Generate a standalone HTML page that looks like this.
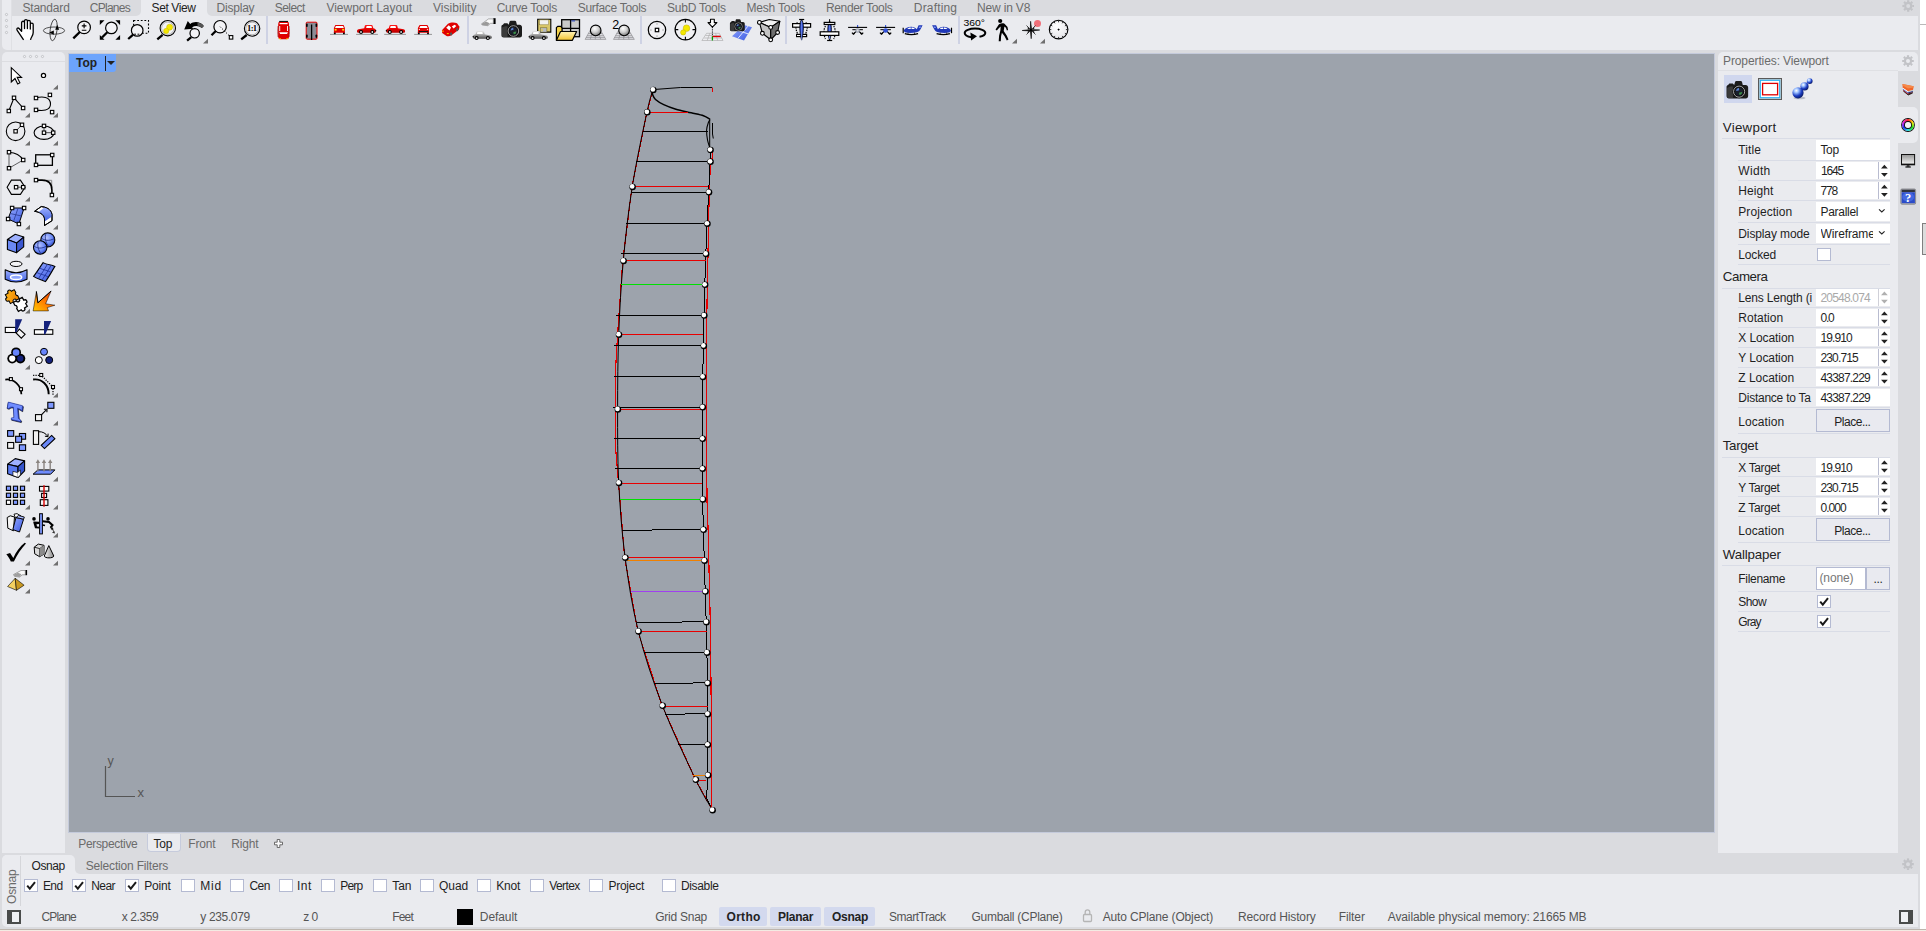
<!DOCTYPE html>
<html><head><meta charset="utf-8"><title>Rhino</title>
<style>
html,body{margin:0;padding:0;}
body{width:1926px;height:931px;overflow:hidden;background:#DADBDF;position:relative;font-family:"Liberation Sans", sans-serif;}
body>div,body>svg,body>span{position:absolute;}
.t{white-space:pre;line-height:16px;height:16px;}
svg{overflow:visible;}
</style></head><body>
<div style="left:1920px;top:0px;width:6px;height:929px;background:#fff;"></div>
<div style="left:1920px;top:24px;width:6px;height:1px;background:#b9b9b9;"></div>
<div style="left:1922px;top:223px;width:6px;height:32px;background:#dcdcdc;border:1px solid #7f7f7f;box-sizing:border-box;"></div>
<div style="left:0px;top:929px;width:1926px;height:1px;background:#bdb5ad;"></div>
<div style="left:0px;top:930px;width:1926px;height:1px;background:#f3ebe3;"></div>
<div style="left:2px;top:0px;width:1916px;height:50px;background:#EAEBEF;border-radius:0 0 0 5px;"></div>
<div style="left:11px;top:0px;width:130px;height:16px;background:#DADBDF;border-radius:0 0 5px 0;"></div>
<div style="left:207px;top:0px;width:1711px;height:16px;background:#DADBDF;border-radius:0 0 0 5px;"></div>
<div style="left:11px;top:0px;width:1px;height:50px;background:#dfe0e4;"></div>
<svg style="left:4px;top:11.5px" width="5" height="5" viewBox="0 0 5 5"><circle cx="2.5" cy="2.5" r="1.1" fill="#f2f2f5" stroke="#b2b3b8" stroke-width=".7"/></svg>
<svg style="left:4px;top:17.5px" width="5" height="5" viewBox="0 0 5 5"><circle cx="2.5" cy="2.5" r="1.1" fill="#f2f2f5" stroke="#b2b3b8" stroke-width=".7"/></svg>
<svg style="left:4px;top:23.5px" width="5" height="5" viewBox="0 0 5 5"><circle cx="2.5" cy="2.5" r="1.1" fill="#f2f2f5" stroke="#b2b3b8" stroke-width=".7"/></svg>
<svg style="left:4px;top:29.5px" width="5" height="5" viewBox="0 0 5 5"><circle cx="2.5" cy="2.5" r="1.1" fill="#f2f2f5" stroke="#b2b3b8" stroke-width=".7"/></svg>
<div style="left:266px;top:16px;width:2px;height:28px;background:#ced2e4;"></div>
<div style="left:467px;top:16px;width:2px;height:28px;background:#ced2e4;"></div>
<div style="left:640px;top:16px;width:2px;height:28px;background:#ced2e4;"></div>
<div style="left:785px;top:16px;width:2px;height:28px;background:#ced2e4;"></div>
<div style="left:958px;top:16px;width:2px;height:28px;background:#ced2e4;"></div>
<div style="left:2px;top:52px;width:63px;height:801px;background:#EAEBEF;border-radius:5px 5px 0 0;"></div>
<div style="left:2px;top:61px;width:63px;height:1px;background:#dcdde1;"></div>
<svg style="left:22.0px;top:54.0px" width="5" height="5" viewBox="0 0 5 5"><circle cx="2.5" cy="2.5" r="1.1" fill="#f2f2f5" stroke="#b2b3b8" stroke-width=".7"/></svg>
<svg style="left:28.0px;top:54.0px" width="5" height="5" viewBox="0 0 5 5"><circle cx="2.5" cy="2.5" r="1.1" fill="#f2f2f5" stroke="#b2b3b8" stroke-width=".7"/></svg>
<svg style="left:34.0px;top:54.0px" width="5" height="5" viewBox="0 0 5 5"><circle cx="2.5" cy="2.5" r="1.1" fill="#f2f2f5" stroke="#b2b3b8" stroke-width=".7"/></svg>
<svg style="left:40.0px;top:54.0px" width="5" height="5" viewBox="0 0 5 5"><circle cx="2.5" cy="2.5" r="1.1" fill="#f2f2f5" stroke="#b2b3b8" stroke-width=".7"/></svg>
<div style="left:68px;top:53px;width:1647px;height:780px;background:#c4cadb;"></div>
<div style="left:69px;top:54px;width:1645px;height:778px;background:#9DA3AC;"></div>
<div style="left:69px;top:54px;width:47px;height:18px;background:#6ca4fc;border-radius:0 0 3px 0;"></div>
<div style="left:105px;top:56px;width:1px;height:15px;background:#222;"></div>
<div style="left:106.800px;top:61px;width:0;height:0;border-left:4px solid transparent;border-right:4px solid transparent;border-top:4.400px solid #222"></div>
<div style="left:146.5px;top:834px;width:34.5px;height:18px;background:#EAEBEF;border-radius:0 0 4px 4px;border:1px solid #c6cbdc;border-top:none;box-sizing:border-box;"></div>
<svg style="left:274px;top:839px" width="9" height="9" viewBox="0 0 9 9"><path d="M3.200 .5h2.600v2.700h2.700v2.600h-2.700v2.700h-2.600v-2.700h-2.700v-2.600h2.700z" fill="#fbfbfc" stroke="#5c5c5c" stroke-width=".9"/></svg>
<div style="left:1718px;top:52px;width:200px;height:19px;background:#EAEBEF;border-radius:5px 5px 0 0;"></div>
<div style="left:1718px;top:71px;width:180px;height:782px;background:#EAEBEF;"></div>
<div style="left:1718px;top:70px;width:180px;height:1px;background:#dfe0e4;"></div>
<div style="left:1898px;top:107px;width:20px;height:36px;background:#EAEBEF;border-radius:0 5px 5px 0;"></div>
<div style="left:2px;top:855px;width:1916px;height:72px;background:#EAEBEF;border-radius:5px 0 0 5px;"></div>
<div style="left:70px;top:855px;width:1848px;height:19px;background:#DADBDF;"></div>
<div style="left:2px;top:855px;width:73px;height:19px;background:#EAEBEF;border-radius:5px 5px 0 0;"></div>
<div style="left:75px;top:868px;width:6px;height:6px;background:#EAEBEF;"></div>
<div style="left:75px;top:858px;width:12px;height:16px;background:#DADBDF;border-radius:0 0 0 5px;"></div>
<div style="left:20px;top:856px;width:1px;height:50px;background:#d5d6da;"></div>
<div style="left:1722px;top:138px;width:168px;height:1px;background:#d9dce6;"></div>
<div style="left:1816px;top:139.5px;width:74px;height:20.0px;background:#fff;"></div>
<div style="left:1738px;top:160px;width:152px;height:1px;background:#d9dce6;"></div>
<div style="left:1816px;top:161.5px;width:74px;height:17.5px;background:#fff;"></div>
<div style="left:1878px;top:161.5px;width:1px;height:17.5px;background:#b9bcd0;"></div>
<svg style="left:1880px;top:161.5px" width="10" height="17.5" viewBox="0 0 10 17.5"><path d="M1 6.45L4.4 2.6500000000000004L7.800 6.45z M1 10.95L4.4 14.75L7.800 10.95z" fill="#222"/></svg>
<div style="left:1738px;top:180px;width:152px;height:1px;background:#d9dce6;"></div>
<div style="left:1816px;top:181.5px;width:74px;height:17.5px;background:#fff;"></div>
<div style="left:1878px;top:181.5px;width:1px;height:17.5px;background:#b9bcd0;"></div>
<svg style="left:1880px;top:181.5px" width="10" height="17.5" viewBox="0 0 10 17.5"><path d="M1 6.45L4.4 2.6500000000000004L7.800 6.45z M1 10.95L4.4 14.75L7.800 10.95z" fill="#222"/></svg>
<div style="left:1738px;top:200px;width:152px;height:1px;background:#d9dce6;"></div>
<div style="left:1816px;top:202px;width:74px;height:19px;background:#fff;"></div>
<svg style="left:1877px;top:206.7px" width="10" height="8" viewBox="0 0 10 8"><path d="M2 2.300L4.800 5L7.600 2.300" fill="none" stroke="#222" stroke-width="1.100"/></svg>
<div style="left:1738px;top:222px;width:152px;height:1px;background:#d9dce6;"></div>
<div style="left:1816px;top:224px;width:74px;height:19px;background:#fff;"></div>
<svg style="left:1877px;top:228.7px" width="10" height="8" viewBox="0 0 10 8"><path d="M2 2.300L4.800 5L7.600 2.300" fill="none" stroke="#222" stroke-width="1.100"/></svg>
<div style="left:1738px;top:244px;width:152px;height:1px;background:#d9dce6;"></div>
<div style="left:1817px;top:248px;width:14px;height:13px;background:#fff;border:1px solid #b4bad2;box-sizing:border-box;"></div>
<div style="left:1738px;top:264px;width:152px;height:1px;background:#d9dce6;"></div>
<div style="left:1722px;top:287.5px;width:168px;height:1px;background:#d9dce6;"></div>
<div style="left:1816px;top:289px;width:74px;height:17px;background:#fff;"></div>
<div style="left:1878px;top:289px;width:1px;height:17px;background:#d0d0d8;"></div>
<svg style="left:1880px;top:289px" width="10" height="17" viewBox="0 0 10 17"><path d="M1 6.2L4.4 2.4000000000000004L7.800 6.2z M1 10.7L4.4 14.5L7.800 10.7z" fill="#b0b0b0"/></svg>
<div style="left:1738px;top:307px;width:152px;height:1px;background:#d9dce6;"></div>
<div style="left:1811px;top:289px;width:5px;height:18px;background:#EAEBEF;"></div>
<div style="left:1816px;top:309px;width:74px;height:17px;background:#fff;"></div>
<div style="left:1878px;top:309px;width:1px;height:17px;background:#b9bcd0;"></div>
<svg style="left:1880px;top:309px" width="10" height="17" viewBox="0 0 10 17"><path d="M1 6.2L4.4 2.4000000000000004L7.800 6.2z M1 10.7L4.4 14.5L7.800 10.7z" fill="#222"/></svg>
<div style="left:1738px;top:327px;width:152px;height:1px;background:#d9dce6;"></div>
<div style="left:1816px;top:329px;width:74px;height:17px;background:#fff;"></div>
<div style="left:1878px;top:329px;width:1px;height:17px;background:#b9bcd0;"></div>
<svg style="left:1880px;top:329px" width="10" height="17" viewBox="0 0 10 17"><path d="M1 6.2L4.4 2.4000000000000004L7.800 6.2z M1 10.7L4.4 14.5L7.800 10.7z" fill="#222"/></svg>
<div style="left:1738px;top:347px;width:152px;height:1px;background:#d9dce6;"></div>
<div style="left:1816px;top:349px;width:74px;height:17px;background:#fff;"></div>
<div style="left:1878px;top:349px;width:1px;height:17px;background:#b9bcd0;"></div>
<svg style="left:1880px;top:349px" width="10" height="17" viewBox="0 0 10 17"><path d="M1 6.2L4.4 2.4000000000000004L7.800 6.2z M1 10.7L4.4 14.5L7.800 10.7z" fill="#222"/></svg>
<div style="left:1738px;top:367px;width:152px;height:1px;background:#d9dce6;"></div>
<div style="left:1816px;top:369px;width:74px;height:17px;background:#fff;"></div>
<div style="left:1878px;top:369px;width:1px;height:17px;background:#b9bcd0;"></div>
<svg style="left:1880px;top:369px" width="10" height="17" viewBox="0 0 10 17"><path d="M1 6.2L4.4 2.4000000000000004L7.800 6.2z M1 10.7L4.4 14.5L7.800 10.7z" fill="#222"/></svg>
<div style="left:1738px;top:387px;width:152px;height:1px;background:#d9dce6;"></div>
<div style="left:1816px;top:389px;width:74px;height:17px;background:#fff;"></div>
<div style="left:1738px;top:407px;width:152px;height:1px;background:#d9dce6;"></div>
<div style="left:1811px;top:389px;width:5px;height:18px;background:#EAEBEF;"></div>
<div style="left:1816px;top:409px;width:74px;height:23px;background:#e9eaf0;border:1px solid #b4bad2;box-sizing:border-box;"></div>
<div style="left:1738px;top:433px;width:152px;height:1px;background:#d9dce6;"></div>
<div style="left:1722px;top:456.5px;width:168px;height:1px;background:#d9dce6;"></div>
<div style="left:1816px;top:458px;width:74px;height:17px;background:#fff;"></div>
<div style="left:1878px;top:458px;width:1px;height:17px;background:#b9bcd0;"></div>
<svg style="left:1880px;top:458px" width="10" height="17" viewBox="0 0 10 17"><path d="M1 6.2L4.4 2.4000000000000004L7.800 6.2z M1 10.7L4.4 14.5L7.800 10.7z" fill="#222"/></svg>
<div style="left:1738px;top:476px;width:152px;height:1px;background:#d9dce6;"></div>
<div style="left:1816px;top:478px;width:74px;height:17px;background:#fff;"></div>
<div style="left:1878px;top:478px;width:1px;height:17px;background:#b9bcd0;"></div>
<svg style="left:1880px;top:478px" width="10" height="17" viewBox="0 0 10 17"><path d="M1 6.2L4.4 2.4000000000000004L7.800 6.2z M1 10.7L4.4 14.5L7.800 10.7z" fill="#222"/></svg>
<div style="left:1738px;top:496px;width:152px;height:1px;background:#d9dce6;"></div>
<div style="left:1816px;top:498px;width:74px;height:17px;background:#fff;"></div>
<div style="left:1878px;top:498px;width:1px;height:17px;background:#b9bcd0;"></div>
<svg style="left:1880px;top:498px" width="10" height="17" viewBox="0 0 10 17"><path d="M1 6.2L4.4 2.4000000000000004L7.800 6.2z M1 10.7L4.4 14.5L7.800 10.7z" fill="#222"/></svg>
<div style="left:1738px;top:516px;width:152px;height:1px;background:#d9dce6;"></div>
<div style="left:1816px;top:518px;width:74px;height:23px;background:#e9eaf0;border:1px solid #b4bad2;box-sizing:border-box;"></div>
<div style="left:1738px;top:542px;width:152px;height:1px;background:#d9dce6;"></div>
<div style="left:1722px;top:565px;width:168px;height:1px;background:#d9dce6;"></div>
<div style="left:1816px;top:567px;width:50px;height:23px;background:#fff;border:1px solid #b4bad2;box-sizing:border-box;"></div>
<div style="left:1866px;top:567px;width:24px;height:23px;background:#e9eaf0;border:1px solid #b4bad2;box-sizing:border-box;"></div>
<div style="left:1738px;top:591px;width:152px;height:1px;background:#d9dce6;"></div>
<div style="left:1817px;top:595px;width:14px;height:13px;background:#fff;border:1px solid #b4bad2;box-sizing:border-box;"></div>
<svg style="left:1817px;top:595px" width="14" height="13" viewBox="0 0 14 13"><path d="M3.2 6.600L5.800 9.600L11 3.200" fill="none" stroke="#1a1a1a" stroke-width="2"/></svg>
<div style="left:1738px;top:611px;width:152px;height:1px;background:#d9dce6;"></div>
<div style="left:1817px;top:615px;width:14px;height:13px;background:#fff;border:1px solid #b4bad2;box-sizing:border-box;"></div>
<svg style="left:1817px;top:615px" width="14" height="13" viewBox="0 0 14 13"><path d="M3.2 6.600L5.800 9.600L11 3.200" fill="none" stroke="#1a1a1a" stroke-width="2"/></svg>
<div style="left:1738px;top:631px;width:152px;height:1px;background:#d9dce6;"></div>
<div style="left:1724px;top:75px;width:28px;height:28px;background:#d0d7ee;"></div>
<svg style="left:1724.300px;top:77.500px" width="26" height="24" viewBox="0 0 26 24"><g transform="translate(0 0) scale(1.05)"><path d="M2.400 8.500c0-1 .6-1.600 1.500-1.800l1.200-1.400h3.300l1.300 1.400 .9-3.200c.2-.5 .6-.7 1.100-.7h4.200c.6 0 1 .3 1.200.8l.8 3.100h2.800c1.200 0 2.300 1 2.300 2.300v8.200c0 1.300-1 2.300-2.300 2.300H4.700c-1.300 0-2.300-1-2.300-2.300z" fill="#1c1c1c"/><path d="M3 9.500c2-1.200 4-1.500 5.500-1.200v10.800H4.700c-1 0-1.700-.7-1.700-1.700z" fill="#3a3a3a"/><circle cx="14.400" cy="13" r="6.300" fill="#0c0c0c"/><circle cx="14.400" cy="13" r="5.300" fill="none" stroke="#c4c4c4" stroke-width=".8"/><circle cx="14.400" cy="13" r="3.900" fill="#1a1f2c"/><path d="M11.600 12.400a3 3 0 0 1 2.600-2.900l.3 2.200z" fill="#5a84d8"/><path d="M17.300 13.400a3 3 0 0 1-2.600 2.900l-.4-2.200z" fill="#3a9048"/></g></svg>
<svg style="left:1758px;top:78px" width="24" height="22" viewBox="0 0 24 22"><rect x=".5" y=".5" width="23" height="21" fill="#c9c9c9" stroke="#5a5a5a" stroke-width="1"/><rect x="2.300" y="2.300" width="19.400" height="17.400" fill="#fff" stroke="#2fb4f4" stroke-width="1.200"/><rect x="4.600" y="5.400" width="15" height="11.400" fill="#fff" stroke="#e00000" stroke-width="1.300"/></svg>
<svg style="left:1790px;top:76px" width="26" height="26" viewBox="0 0 26 26"><ellipse cx="9.500" cy="22" rx="6" ry="1.300" fill="#b9bcc6"/><circle cx="19.700" cy="5.100" r="2.900" fill="url(#gglo)"/><circle cx="14.500" cy="10.400" r="4.100" fill="url(#gglo)"/><circle cx="8" cy="16.800" r="5.600" fill="url(#gglo)"/></svg>
<svg style="left:1900px;top:80px" width="18" height="18" viewBox="0 0 18 18"><path d="M2.500 4L13.700 6.200L13 9.900L7.900 11.300L2.700 7.700z" fill="#f0662a"/><path d="M2.500 4L13.700 6.200L13.400 7.600L8 8.600L2.600 5.500z" fill="#f58a4a"/><path d="M2.700 7.700L7.900 11.300V12.400L2.800 8.700z" fill="#fff"/><path d="M7.900 11.300L13 9.900L12.900 10.900L7.900 12.400z" fill="#c8c8c8"/><path d="M2.800 8.700L7.900 12.400L8 13.600L3 9.800z" fill="#3058d0"/><path d="M7.900 12.400L12.900 10.900L12.800 11.900L8 13.600z" fill="#1a2a80"/><path d="M3 9.800L8 13.600L8.200 15L3.300 11z" fill="#d02020"/><path d="M8 13.600L12.800 11.900L12.600 13.100L8.200 15z" fill="#5a1010"/><path d="M3.300 11L8.200 15L12.600 13.100" fill="none" stroke="#111" stroke-width=".8"/></svg>
<div style="left:1902px;top:119px;width:11.800px;height:11.800px;border-radius:50%;background:conic-gradient(#ff2020,#ffe000,#20e020,#20e0e0,#2030ff,#e020e0,#ff2020);box-shadow:0 0 0 .9px #111"></div>
<div style="left:1905.100px;top:122.100px;width:5.600px;height:5.600px;border-radius:50%;background:#f4f4f6;box-shadow:0 0 0 .9px #111"></div>
<svg style="left:1900px;top:153px" width="16" height="16" viewBox="0 0 16 16"><rect x="1" y="1" width="14.100" height="11.300" fill="#111"/><rect x="2" y="2" width="12.100" height="8.600" fill="url(#gmon)"/><rect x="6.700" y="12.300" width="2.800" height="1.300" fill="#111"/><rect x="5.400" y="13.400" width="5.400" height="1.200" fill="#111"/></svg>
<svg style="left:1900px;top:188px" width="17" height="17" viewBox="0 0 17 17"><rect x=".8" y="1" width="14.800" height="15.200" rx="1.200" fill="#b8b8bc" stroke="#7c7c80" stroke-width=".8"/><rect x="1.600" y="1.700" width="13.300" height="2.300" fill="#30343c"/><rect x="1.600" y="4.200" width="13.300" height="11" fill="#2c4cc8"/><ellipse cx="8.200" cy="9" rx="6" ry="4.600" fill="#4468e0"/><text x="8.200" y="14.200" text-anchor="middle" font-family="Liberation Serif, serif" font-weight="700" font-size="12.500" fill="#fff">?</text></svg>
<div style="left:24px;top:879px;width:14px;height:13px;background:#fff;border:1px solid #b4bad2;box-sizing:border-box;"></div>
<svg style="left:24px;top:879px" width="14" height="13" viewBox="0 0 14 13"><path d="M3.2 6.600L5.800 9.600L11 3.200" fill="none" stroke="#1a1a1a" stroke-width="2"/></svg>
<div style="left:72px;top:879px;width:14px;height:13px;background:#fff;border:1px solid #b4bad2;box-sizing:border-box;"></div>
<svg style="left:72px;top:879px" width="14" height="13" viewBox="0 0 14 13"><path d="M3.2 6.600L5.800 9.600L11 3.200" fill="none" stroke="#1a1a1a" stroke-width="2"/></svg>
<div style="left:125px;top:879px;width:14px;height:13px;background:#fff;border:1px solid #b4bad2;box-sizing:border-box;"></div>
<svg style="left:125px;top:879px" width="14" height="13" viewBox="0 0 14 13"><path d="M3.2 6.600L5.800 9.600L11 3.200" fill="none" stroke="#1a1a1a" stroke-width="2"/></svg>
<div style="left:181px;top:879px;width:14px;height:13px;background:#fff;border:1px solid #b4bad2;box-sizing:border-box;"></div>
<div style="left:230px;top:879px;width:14px;height:13px;background:#fff;border:1px solid #b4bad2;box-sizing:border-box;"></div>
<div style="left:279px;top:879px;width:14px;height:13px;background:#fff;border:1px solid #b4bad2;box-sizing:border-box;"></div>
<div style="left:321px;top:879px;width:14px;height:13px;background:#fff;border:1px solid #b4bad2;box-sizing:border-box;"></div>
<div style="left:373px;top:879px;width:14px;height:13px;background:#fff;border:1px solid #b4bad2;box-sizing:border-box;"></div>
<div style="left:420px;top:879px;width:14px;height:13px;background:#fff;border:1px solid #b4bad2;box-sizing:border-box;"></div>
<div style="left:477px;top:879px;width:14px;height:13px;background:#fff;border:1px solid #b4bad2;box-sizing:border-box;"></div>
<div style="left:530px;top:879px;width:14px;height:13px;background:#fff;border:1px solid #b4bad2;box-sizing:border-box;"></div>
<div style="left:589px;top:879px;width:14px;height:13px;background:#fff;border:1px solid #b4bad2;box-sizing:border-box;"></div>
<div style="left:662px;top:879px;width:14px;height:13px;background:#fff;border:1px solid #b4bad2;box-sizing:border-box;"></div>
<svg style="left:7px;top:910px" width="14" height="14" viewBox="0 0 14 14"><rect x="1" y="1" width="12" height="12" fill="#f0f1f4" stroke="#4a4c4b" stroke-width="2"/><rect x="0" y="0" width="5" height="14" fill="#4a4c4b"/></svg>
<svg style="left:1899px;top:910px" width="14" height="14" viewBox="0 0 14 14"><rect x="1" y="1" width="12" height="12" fill="#f0f1f4" stroke="#4a4c4b" stroke-width="2"/><rect x="9" y="0" width="5" height="14" fill="#4a4c4b"/></svg>
<div style="left:457px;top:909px;width:16px;height:16px;background:#000;"></div>
<div style="left:719px;top:907px;width:48px;height:19px;background:#d3d9ee;border-radius:2px;"></div>
<div style="left:770px;top:907px;width:51px;height:19px;background:#d3d9ee;border-radius:2px;"></div>
<div style="left:824px;top:907px;width:51px;height:19px;background:#d3d9ee;border-radius:2px;"></div>
<svg style="left:1082px;top:908px" width="11" height="15" viewBox="0 0 11 15"><rect x="1.5" y="6.500" width="8" height="7" rx="1" fill="none" stroke="#b5b5b5" stroke-width="1.300"/><path d="M3.200 6.500V4.200a2.300 2.300 0 0 1 4.600 0V6.500" fill="none" stroke="#b5b5b5" stroke-width="1.300"/></svg>
<svg style="left:0;top:0" width="1926" height="931" viewBox="0 0 1926 931"><line x1="1912.20" y1="6.00" x2="1914.00" y2="6.00" stroke="#c2c3c7" stroke-width="2.2"/><line x1="1911.03" y1="8.83" x2="1912.30" y2="10.10" stroke="#c2c3c7" stroke-width="2.2"/><line x1="1908.20" y1="10.00" x2="1908.20" y2="11.80" stroke="#c2c3c7" stroke-width="2.2"/><line x1="1905.37" y1="8.83" x2="1904.10" y2="10.10" stroke="#c2c3c7" stroke-width="2.2"/><line x1="1904.20" y1="6.00" x2="1902.40" y2="6.00" stroke="#c2c3c7" stroke-width="2.2"/><line x1="1905.37" y1="3.17" x2="1904.10" y2="1.90" stroke="#c2c3c7" stroke-width="2.2"/><line x1="1908.20" y1="2.00" x2="1908.20" y2="0.20" stroke="#c2c3c7" stroke-width="2.2"/><line x1="1911.03" y1="3.17" x2="1912.30" y2="1.90" stroke="#c2c3c7" stroke-width="2.2"/><circle cx="1908.2" cy="6" r="3.10" fill="none" stroke="#c2c3c7" stroke-width="2.2"/><line x1="1912.00" y1="61.00" x2="1913.80" y2="61.00" stroke="#c2c3c7" stroke-width="2.2"/><line x1="1910.83" y1="63.83" x2="1912.10" y2="65.10" stroke="#c2c3c7" stroke-width="2.2"/><line x1="1908.00" y1="65.00" x2="1908.00" y2="66.80" stroke="#c2c3c7" stroke-width="2.2"/><line x1="1905.17" y1="63.83" x2="1903.90" y2="65.10" stroke="#c2c3c7" stroke-width="2.2"/><line x1="1904.00" y1="61.00" x2="1902.20" y2="61.00" stroke="#c2c3c7" stroke-width="2.2"/><line x1="1905.17" y1="58.17" x2="1903.90" y2="56.90" stroke="#c2c3c7" stroke-width="2.2"/><line x1="1908.00" y1="57.00" x2="1908.00" y2="55.20" stroke="#c2c3c7" stroke-width="2.2"/><line x1="1910.83" y1="58.17" x2="1912.10" y2="56.90" stroke="#c2c3c7" stroke-width="2.2"/><circle cx="1908" cy="61" r="3.10" fill="none" stroke="#c2c3c7" stroke-width="2.2"/><line x1="1912.00" y1="864.20" x2="1913.80" y2="864.20" stroke="#c2c3c7" stroke-width="2.2"/><line x1="1910.83" y1="867.03" x2="1912.10" y2="868.30" stroke="#c2c3c7" stroke-width="2.2"/><line x1="1908.00" y1="868.20" x2="1908.00" y2="870.00" stroke="#c2c3c7" stroke-width="2.2"/><line x1="1905.17" y1="867.03" x2="1903.90" y2="868.30" stroke="#c2c3c7" stroke-width="2.2"/><line x1="1904.00" y1="864.20" x2="1902.20" y2="864.20" stroke="#c2c3c7" stroke-width="2.2"/><line x1="1905.17" y1="861.37" x2="1903.90" y2="860.10" stroke="#c2c3c7" stroke-width="2.2"/><line x1="1908.00" y1="860.20" x2="1908.00" y2="858.40" stroke="#c2c3c7" stroke-width="2.2"/><line x1="1910.83" y1="861.37" x2="1912.10" y2="860.10" stroke="#c2c3c7" stroke-width="2.2"/><circle cx="1908" cy="864.2" r="3.10" fill="none" stroke="#c2c3c7" stroke-width="2.2"/></svg>
<svg width="0" height="0" style="left:0;top:0"><defs><linearGradient id="gcar" x1="0" y1="0" x2="0" y2="1"><stop offset="0" stop-color="#e8e8e8"/><stop offset=".45" stop-color="#a8a8a8"/><stop offset="1" stop-color="#4a4a4a"/></linearGradient><linearGradient id="gfold" x1="0" y1="0" x2="0" y2="1"><stop offset="0" stop-color="#fff3b8"/><stop offset="1" stop-color="#f2c230"/></linearGradient><radialGradient id="gsph" cx=".4" cy=".32" r=".72"><stop offset="0" stop-color="#fff"/><stop offset=".5" stop-color="#d0d0d0"/><stop offset="1" stop-color="#6e6e6e"/></radialGradient><linearGradient id="gblue" x1="0" y1="0" x2="1" y2="1"><stop offset="0" stop-color="#93a8ff"/><stop offset="1" stop-color="#3a58e0"/></linearGradient><radialGradient id="gclk" cx=".4" cy=".3" r=".7"><stop offset="0" stop-color="#fff"/><stop offset="1" stop-color="#e6e6ea"/></radialGradient><linearGradient id="gbluev" x1="0" y1="0" x2="0" y2="1"><stop offset="0" stop-color="#9db0ff"/><stop offset="1" stop-color="#4060e0"/></linearGradient><linearGradient id="gred" x1="0" y1="0" x2="0" y2="1"><stop offset="0" stop-color="#ff1c1c"/><stop offset=".5" stop-color="#e80000"/><stop offset="1" stop-color="#b40000"/></linearGradient><linearGradient id="gorg" x1="0" y1="0" x2="1" y2="1"><stop offset="0" stop-color="#ffc020"/><stop offset="1" stop-color="#f08000"/></linearGradient><linearGradient id="gexp" x1="0" y1="1" x2="1" y2="0"><stop offset="0" stop-color="#ffc800"/><stop offset=".5" stop-color="#ff7a00"/><stop offset="1" stop-color="#e02800"/></linearGradient><linearGradient id="gcone" x1="0" y1="0" x2="1" y2="0"><stop offset="0" stop-color="#f4f4f4"/><stop offset="1" stop-color="#8a8a8a"/></linearGradient><radialGradient id="gglo" cx=".35" cy=".3" r=".8"><stop offset="0" stop-color="#fff"/><stop offset=".25" stop-color="#9cc0ff"/><stop offset=".6" stop-color="#1c3cc0"/><stop offset="1" stop-color="#04104a"/></radialGradient><linearGradient id="gmon" x1="0" y1="0" x2="0" y2="1"><stop offset="0" stop-color="#9a9a9a"/><stop offset="1" stop-color="#eeeeee"/></linearGradient><radialGradient id="gbsph" cx=".4" cy=".35" r=".75"><stop offset="0" stop-color="#b8c6ff"/><stop offset=".6" stop-color="#6484f4"/><stop offset="1" stop-color="#2238a8"/></radialGradient></defs></svg>
<svg style="left:14px;top:18px" width="24" height="24" viewBox="0 0 24 24"><path d="M9.600 21.800L3.200 12.300C2.100 10.600 3.800 9.200 5.300 10.700L7.600 13.300V4.700a1.450 1.450 0 0 1 2.900 0V10.500V3.100a1.450 1.450 0 0 1 2.900 0V10.500V3.900a1.450 1.450 0 0 1 2.900 0V11V6.500a1.450 1.450 0 0 1 2.900 0V14.500C19.200 17.500 17.200 19 16.500 21.800" fill="#fff" stroke="#000" stroke-width="1.300" stroke-linejoin="round"/></svg>
<svg style="left:42px;top:18px" width="24" height="24" viewBox="0 0 24 24"><ellipse cx="12" cy="12.6" rx="10.6" ry="3.6" fill="none" stroke="#2a2a2a" stroke-width=".8"/><ellipse cx="11.6" cy="12" rx="3.4" ry="10.8" fill="none" stroke="#2a2a2a" stroke-width=".8" transform="rotate(7 12 12)"/><path d="M15.200 6.700l2 5h-4z" fill="#000"/><path d="M7.200 14.600l4.600-2.100v4.200z" fill="#000"/></svg>
<svg style="left:70px;top:18px" width="24" height="24" viewBox="0 0 24 24"><circle cx="14.100" cy="9.400" r="6.300" fill="#f3f3f6" stroke="#000" stroke-width="1.200"/><path d="M9.800 14L3.300 20.400" stroke="#000" stroke-width="2.3" stroke-linecap="butt"/><path d="M11.800 7.900h4.600M14.100 5.600v4.600M11.800 12.300h4.600" stroke="#000" stroke-width="1.100"/></svg>
<svg style="left:98px;top:18px" width="24" height="24" viewBox="0 0 24 24"><path d="M1.800 2.200h4.700l-4.700 4.700zM22.100 2.200h-4.700l4.700 4.700zM1.800 21.800h4.700l-4.700-4.700zM22.100 21.800h-4.700l4.700-4.700z" fill="#000"/><circle cx="13.400" cy="9.900" r="5.800" fill="#f3f3f6" stroke="#000" stroke-width="1.200"/><path d="M9.300 14.200L4 19.500" stroke="#000" stroke-width="2.3" stroke-linecap="butt"/></svg>
<svg style="left:126px;top:18px" width="24" height="24" viewBox="0 0 24 24"><rect x="7.600" y="2.500" width="14.900" height="12.800" fill="none" stroke="#000" stroke-width="1.100" stroke-dasharray="1.800 1.800"/><circle cx="11.200" cy="12.400" r="5.800" fill="#f3f3f6" stroke="#000" stroke-width="1.200"/><path d="M8.200 16.200h6" stroke="#000" stroke-width="1" stroke-dasharray="1.800 1.500"/><path d="M7.100 16.700L2.200 21" stroke="#000" stroke-width="2.3" stroke-linecap="butt"/></svg>
<svg style="left:154px;top:18px" width="24" height="24" viewBox="0 0 24 24"><circle cx="13.800" cy="10.200" r="7.700" fill="#f3f3f6" stroke="#000" stroke-width="1.100"/><circle cx="13.800" cy="10.200" r="6.200" fill="none" stroke="#8a8a8a" stroke-width=".6"/><circle cx="15.600" cy="9.200" r="3" fill="#f4e800" stroke="#c8b800" stroke-width=".5"/><circle cx="12.200" cy="12.900" r="2.600" fill="#f4e800" stroke="#c8b800" stroke-width=".5"/><path d="M8.600 16.800L3.300 21.300" stroke="#000" stroke-width="2.3" stroke-linecap="butt"/></svg>
<svg style="left:182px;top:18px" width="24" height="24" viewBox="0 0 24 24"><path d="M2.200 11.600L5.800 2.900L8.200 6C12 3.100 18 3.300 21.800 7.900L19.900 10.100C17 7.400 13 7.300 10.100 9.200L11.600 10.700z" fill="#000"/><path d="M15.500 4.500C18 4.800 20 5.900 21.800 7.900L19.900 10.100C18.600 8.900 17.200 8.200 15.500 7.800z" fill="#555"/><circle cx="12.700" cy="15.300" r="4.700" fill="#f3f3f6" stroke="#000" stroke-width="1.200"/><path d="M9.300 19.200L5.100 22.600" stroke="#000" stroke-width="2.3" stroke-linecap="butt"/><path d="M21 25.5H26V20.800z" fill="#6f6f6f"/></svg>
<svg style="left:210px;top:18px" width="24" height="24" viewBox="0 0 24 24"><circle cx="10.100" cy="8.700" r="6.200" fill="#f3f3f6" stroke="#000" stroke-width="1.200"/><path d="M5.800 13L1.500 17.300" stroke="#000" stroke-width="2.3" stroke-linecap="butt"/><path d="M10.100 8.700L19.500 18" stroke="#000" stroke-width="1" stroke-dasharray="1.200 1.600"/><rect x="19.300" y="17.600" width="3.500" height="3.500" fill="#fff" stroke="#000" stroke-width="1.100"/></svg>
<svg style="left:238px;top:18px" width="24" height="24" viewBox="0 0 24 24"><circle cx="14.100" cy="10.500" r="7.700" fill="#f3f3f6" stroke="#000" stroke-width="1.100"/><circle cx="14.100" cy="10.500" r="6.300" fill="none" stroke="#8a8a8a" stroke-width=".6"/><text x="13.800" y="13.400" text-anchor="middle" font-family="Liberation Serif, serif" font-weight="700" font-size="8.600" letter-spacing="-.7" fill="#000">1:1</text><path d="M8.700 17L3.200 21.400" stroke="#000" stroke-width="2.3" stroke-linecap="butt"/></svg>
<svg style="left:271px;top:18px" width="24" height="24" viewBox="0 0 24 24"><rect x="7.200" y="3.600" width="10.800" height="17.600" rx="2.200" fill="#e00000"/><path d="M7.200 8c-.4 3-.4 8 0 11M18 8c.4 3 .4 8 0 11" stroke="#a00000" stroke-width=".8" fill="none"/><rect x="8.200" y="2.900" width="8.800" height="1.100" fill="#111"/><rect x="8.600" y="5" width="8" height="1.200" fill="#fff"/><rect x="8.300" y="8" width=".9" height="5" fill="#fff"/><rect x="16" y="8" width=".9" height="5" fill="#fff"/><path d="M8.200 14.300h8.800l-1 1.800h-6.800z" fill="#fff"/><rect x="8.100" y="20.300" width="1.800" height=".9" fill="#ffe000"/><rect x="15.300" y="20.300" width="1.800" height=".9" fill="#ffe000"/></svg>
<svg style="left:299px;top:18px" width="24" height="24" viewBox="0 0 24 24"><rect x="7.200" y="4.200" width="10.800" height="17" rx="1" fill="#8a8c96" stroke="#e00000" stroke-width="1"/><rect x="7" y="5.600" width="1.700" height="3.400" rx=".8" fill="#000"/><rect x="16.500" y="5.600" width="1.700" height="3.400" rx=".8" fill="#000"/><rect x="7" y="16.500" width="1.700" height="3.400" rx=".8" fill="#000"/><rect x="16.500" y="16.500" width="1.700" height="3.400" rx=".8" fill="#000"/><path d="M12.600 6.500V22" stroke="#000" stroke-width="1.300"/></svg>
<svg style="left:327px;top:18px" width="24" height="24" viewBox="0 0 24 24"><path d="M3 16.400H21" stroke="#8c8c8c" stroke-width=".9"/><rect x="6.900" y="14" width="1.800" height="2.200" fill="#000"/><rect x="16" y="14" width="1.800" height="2.200" fill="#000"/><path d="M8.300 7h8.300l1.300 3v4.800h-11v-4.800z" fill="#e00000"/><path d="M8.900 8.100h7.100l.9 1.900h-8.900z" fill="#fff"/><rect x="7.700" y="10.900" width="1.900" height="1.700" fill="#ffe000"/><rect x="15.200" y="10.900" width="1.900" height="1.700" fill="#ffe000"/></svg>
<svg style="left:355px;top:18px" width="24" height="24" viewBox="0 0 24 24"><g transform="translate(24.100 0) scale(-1 1)"><path d="M1.200 16.400H23" stroke="#8c8c8c" stroke-width=".9"/><g transform="translate(0 0)"><path d="M3.200 12.200C3.200 11 4.500 10.400 5.800 10.200L6.600 7.500C6.700 7.100 7 6.900 7.400 6.900H13.300C13.800 6.900 14 7.100 14.200 7.600L14.900 10.200L20.500 11.300C21.600 11.600 22.100 12.300 22.100 13.200C22.100 14 21.600 14.700 20.800 14.700H4.200C3.500 14.700 3.200 13.600 3.200 12.200z" fill="url(#gred)"/><path d="M7.700 8h4.800l.5 1.900h-5.900z" fill="#fff"/><circle cx="6.800" cy="14" r="2" fill="#000"/><circle cx="6.800" cy="14" r=".9" fill="#e8e8e8"/><circle cx="18.100" cy="14" r="2" fill="#000"/><circle cx="18.100" cy="14" r=".9" fill="#e8e8e8"/><circle cx="3.400" cy="12.700" r=".7" fill="#000"/></g></g></svg>
<svg style="left:383px;top:18px" width="24" height="24" viewBox="0 0 24 24"><path d="M1.200 16.400H23" stroke="#8c8c8c" stroke-width=".9"/><g transform="translate(0 0)"><path d="M3.200 12.200C3.200 11 4.500 10.400 5.800 10.200L6.600 7.500C6.700 7.100 7 6.900 7.400 6.900H13.300C13.800 6.900 14 7.100 14.200 7.600L14.900 10.200L20.500 11.300C21.600 11.600 22.100 12.300 22.100 13.200C22.100 14 21.600 14.700 20.800 14.700H4.200C3.500 14.700 3.200 13.600 3.200 12.200z" fill="url(#gred)"/><path d="M7.700 8h4.800l.5 1.900h-5.900z" fill="#fff"/><circle cx="6.800" cy="14" r="2" fill="#000"/><circle cx="6.800" cy="14" r=".9" fill="#e8e8e8"/><circle cx="18.100" cy="14" r="2" fill="#000"/><circle cx="18.100" cy="14" r=".9" fill="#e8e8e8"/><circle cx="3.400" cy="12.700" r=".7" fill="#000"/></g></svg>
<svg style="left:411px;top:18px" width="24" height="24" viewBox="0 0 24 24"><path d="M3.200 16.400H21" stroke="#8c8c8c" stroke-width=".9"/><rect x="6.900" y="14" width="1.800" height="2.200" fill="#000"/><rect x="16.100" y="14" width="1.800" height="2.200" fill="#000"/><path d="M8.600 7h7.800l1.600 3v4.800h-11.100v-4.800z" fill="#e00000"/><path d="M9.300 8h6.400l1 1.900h-8.400z" fill="#fff"/><rect x="7.800" y="10.900" width="1.200" height=".9" fill="#fff"/><rect x="15.900" y="10.900" width="1.200" height=".9" fill="#fff"/><rect x="7.800" y="13" width="9.400" height="1" fill="#111"/></svg>
<svg style="left:439px;top:18px" width="24" height="24" viewBox="0 0 24 24"><path d="M2.900 12.200L9 5.800c2.500-1.600 6.500-1.800 9-.5l2.500 3.500-.5 2.700-7.500 5.700c-1.500 1-3.500 1.400-5 .8L3.200 15z" fill="#e00000"/><path d="M7.200 9.800l2.600-2.600 2.200 2.200-1.500 3z" fill="#fff"/><path d="M12.800 8.600l2.800-1.900 1.700 1.200-2.600 2.600z" fill="#fff"/><ellipse cx="18.200" cy="11.700" rx="1.100" ry="1.600" fill="#555"/><ellipse cx="12.100" cy="15.900" rx="1.100" ry="1.600" fill="#555"/><rect x="3" y="12.600" width="1.800" height="1.100" fill="#ffb000"/><rect x="7.800" y="15" width="2" height="1.100" fill="#ffb000"/></svg>
<svg style="left:471px;top:18px" width="24" height="24" viewBox="0 0 24 24"><rect x="22.300" y=".2" width="2.300" height="5.800" fill="#000"/><path d="M22.300 .9H17.600L10.600 5.800L11.200 7L16.800 7.700L19.600 5.300H22.300z" fill="#fafafa" stroke="#666" stroke-width=".5"/><path d="M10.600 5.800L15 3.600L18.600 5.200L16.800 7.700L11.200 7z" fill="#9a9a9a"/><g transform="translate(-1.2 6.1)"><path d="M3.200 12.200C3.200 11 4.500 10.400 5.800 10.200L6.600 7.500C6.700 7.100 7 6.900 7.400 6.900H13.300C13.800 6.900 14 7.100 14.200 7.600L14.900 10.200L20.500 11.300C21.600 11.600 22.100 12.300 22.100 13.200C22.100 14 21.600 14.700 20.800 14.700H4.200C3.500 14.700 3.200 13.600 3.200 12.200z" fill="url(#gcar)"/><path d="M7.700 8h4.800l.5 1.900h-5.900z" fill="#fff"/><circle cx="6.800" cy="14" r="2" fill="#000"/><circle cx="6.800" cy="14" r=".9" fill="#e8e8e8"/><circle cx="18.100" cy="14" r="2" fill="#000"/><circle cx="18.100" cy="14" r=".9" fill="#e8e8e8"/><circle cx="3.400" cy="12.700" r=".7" fill="#000"/></g></svg>
<svg style="left:499px;top:18px" width="24" height="24" viewBox="0 0 24 24"><g transform="translate(0 0) scale(1)"><path d="M2.400 8.500c0-1 .6-1.600 1.500-1.800l1.200-1.400h3.300l1.300 1.400 .9-3.200c.2-.5 .6-.7 1.100-.7h4.200c.6 0 1 .3 1.200.8l.8 3.100h2.800c1.200 0 2.300 1 2.300 2.300v8.200c0 1.300-1 2.300-2.300 2.300H4.700c-1.300 0-2.300-1-2.300-2.300z" fill="#1c1c1c"/><path d="M3 9.500c2-1.200 4-1.500 5.500-1.200v10.800H4.700c-1 0-1.700-.7-1.700-1.700z" fill="#3a3a3a"/><circle cx="14.400" cy="13" r="6.300" fill="#0c0c0c"/><circle cx="14.400" cy="13" r="5.300" fill="none" stroke="#c4c4c4" stroke-width=".8"/><circle cx="14.400" cy="13" r="3.900" fill="#1a1f2c"/><path d="M11.600 12.400a3 3 0 0 1 2.600-2.900l.3 2.200z" fill="#5a84d8"/><path d="M17.300 13.400a3 3 0 0 1-2.600 2.900l-.4-2.200z" fill="#3a9048"/></g></svg>
<svg style="left:527px;top:18px" width="24" height="24" viewBox="0 0 24 24"><path d="M10.700 1.300H23.800V14.100H12l-1.300-1.300z" fill="#d9c76a" stroke="#000" stroke-width="1.100"/><rect x="12.700" y="1.900" width="9" height="4.900" fill="#f2f2f2" stroke="#8a7a30" stroke-width=".5"/><rect x="13.300" y="9.800" width="6.600" height="4.300" fill="#b8bcc4" stroke="#6a6020" stroke-width=".5"/><rect x="14.200" y="10.700" width="1.700" height="2.600" fill="#d9c76a"/><g transform="translate(-1.2 6.1)"><path d="M3.200 12.200C3.200 11 4.500 10.400 5.800 10.200L6.600 7.500C6.700 7.100 7 6.900 7.400 6.900H13.300C13.800 6.900 14 7.100 14.200 7.600L14.900 10.200L20.500 11.300C21.600 11.600 22.100 12.300 22.100 13.200C22.100 14 21.600 14.700 20.800 14.700H4.200C3.500 14.700 3.200 13.600 3.200 12.200z" fill="url(#gcar)"/><path d="M7.700 8h4.800l.5 1.900h-5.900z" fill="#fff"/><circle cx="6.800" cy="14" r="2" fill="#000"/><circle cx="6.800" cy="14" r=".9" fill="#e8e8e8"/><circle cx="18.100" cy="14" r="2" fill="#000"/><circle cx="18.100" cy="14" r=".9" fill="#e8e8e8"/><circle cx="3.400" cy="12.700" r=".7" fill="#000"/></g></svg>
<svg style="left:555px;top:18px" width="24" height="24" viewBox="0 0 24 24"><rect x="6.700" y="1.700" width="17.800" height="17" fill="#c9c9c9" stroke="#000" stroke-width="1.300"/><path d="M15.600 1.700V18.700M6.700 10.400H24.500" stroke="#000" stroke-width="1.300"/><rect x="16.400" y="2.400" width="3.600" height="1" fill="#2040c0"/><path d="M1.400 22.300V9.600l1.300-1.300h3l1.300 1.500v3.800" fill="#f4d24a" stroke="#000" stroke-width="1.200" stroke-linejoin="round"/><path d="M1.400 22.300L5.500 13.500H21.600L17.400 22.300z" fill="url(#gfold)" stroke="#000" stroke-width="1.200" stroke-linejoin="round"/></svg>
<svg style="left:583px;top:18px" width="24" height="24" viewBox="0 0 24 24"><path d="M6.500 13.400H18.100L22.900 21.400H2.100zM5.300 15.500H19.300M4 17.700H20.600M3 19.600H21.800M9.400 13.400L7.300 21.400M12.300 13.400V21.400M15.200 13.400L17.700 21.400" fill="#dcdce0" stroke="#8e8e92" stroke-width=".7"/><circle cx="12.700" cy="12.400" r="5.300" fill="url(#gsph)" stroke="#000" stroke-width="1.100"/></svg>
<svg style="left:611px;top:18px" width="24" height="24" viewBox="0 0 24 24"><g transform="translate(.4 0)"><path d="M6.500 13.400H18.100L22.900 21.400H2.100zM5.300 15.500H19.300M4 17.700H20.600M3 19.600H21.800M9.400 13.400L7.300 21.400M12.300 13.400V21.400M15.200 13.400L17.700 21.400" fill="#dcdce0" stroke="#8e8e92" stroke-width=".7"/><circle cx="12.700" cy="12.400" r="5.300" fill="url(#gsph)" stroke="#000" stroke-width="1.100"/></g><text x="1.300" y="10.500" font-family="Liberation Sans, sans-serif" font-size="12.500" fill="#000">2</text></svg>
<svg style="left:644px;top:18px" width="24" height="24" viewBox="0 0 24 24"><circle cx="13" cy="12" r="8.700" fill="#f1f1f4" stroke="#000" stroke-width="1.200"/><path d="M13 4.800v2M13 17.200v2M5.800 12h2M18.200 12h2" stroke="#9c9c9c" stroke-width=".8"/><rect x="11.300" y="10.300" width="3.400" height="3.400" fill="#fff" stroke="#000" stroke-width="1.200"/></svg>
<svg style="left:672px;top:18px" width="24" height="24" viewBox="0 0 24 24"><circle cx="13.400" cy="11.600" r="10.300" fill="#f1f1f4" stroke="#000" stroke-width="1.200"/><path d="M13.400 1.300v3.200M13.400 18.700v3.200M3.100 11.600h3.200M20.500 11.600h3.200" stroke="#000" stroke-width="1.100"/><circle cx="14.500" cy="10.200" r="3.300" fill="#f4e800" stroke="#c0b000" stroke-width=".5"/><circle cx="11.200" cy="14.400" r="2.600" fill="#f4e800" stroke="#c0b000" stroke-width=".5"/></svg>
<svg style="left:700px;top:18px" width="24" height="24" viewBox="0 0 24 24"><path d="M6.600 15.300H19.300L23 22.500H1.900zM5.500 17.500H20.400M4.200 20H21.700M9.800 15.300L7.200 22.500M15.600 15.300L17.700 22.500" fill="#ececf0" stroke="#a8a8a8" stroke-width=".6"/><path d="M12.400 9.100V18.500" stroke="#000" stroke-width="1" stroke-dasharray="1.100 1.100"/><path d="M12.400 9.100L8 4.600H10.500V1.300H14.300V4.600H16.900z" fill="#fff" stroke="#000" stroke-width="1.100" stroke-linejoin="round"/><path d="M12.400 18.500H20.800" stroke="#e00000" stroke-width="1.300"/><path d="M12.400 18.500V22.500" stroke="#00a000" stroke-width="1.300"/></svg>
<svg style="left:728px;top:18px" width="24" height="24" viewBox="0 0 24 24"><path d="M16 7L24 9.200L16 22.500L4 18.200z" fill="url(#gblue)"/><path d="M10 12.600L20 15.800M20 8.100L10 20.300" stroke="#dfe6ff" stroke-width="1"/><g transform="translate(0.2 -0.8) scale(0.72)"><path d="M2.400 8.500c0-1 .6-1.600 1.500-1.800l1.200-1.400h3.300l1.300 1.400 .9-3.200c.2-.5 .6-.7 1.100-.7h4.200c.6 0 1 .3 1.200.8l.8 3.100h2.800c1.200 0 2.300 1 2.300 2.300v8.200c0 1.300-1 2.300-2.300 2.300H4.700c-1.300 0-2.300-1-2.300-2.300z" fill="#1c1c1c"/><path d="M3 9.500c2-1.200 4-1.500 5.500-1.200v10.800H4.700c-1 0-1.700-.7-1.700-1.700z" fill="#3a3a3a"/><circle cx="14.400" cy="13" r="6.300" fill="#0c0c0c"/><circle cx="14.400" cy="13" r="5.300" fill="none" stroke="#c4c4c4" stroke-width=".8"/><circle cx="14.400" cy="13" r="3.900" fill="#1a1f2c"/><path d="M11.600 12.400a3 3 0 0 1 2.600-2.900l.3 2.200z" fill="#5a84d8"/><path d="M17.300 13.400a3 3 0 0 1-2.600 2.900l-.4-2.200z" fill="#3a9048"/></g></svg>
<svg style="left:756px;top:18px" width="24" height="24" viewBox="0 0 24 24"><g transform="translate(0 -1)"><path d="M3.400 5.400L13.300 2.500L23.800 4.300L14.700 10.400z" fill="#f2f2f2" stroke="#000" stroke-width="1.100" stroke-linejoin="round"/><path d="M3.400 5.400L14.700 10.400V22.800L6.400 16.300z" fill="#c4c4c4" stroke="#000" stroke-width="1.100" stroke-linejoin="round"/><path d="M14.700 10.400L23.800 4.300L21.600 15.500L14.700 22.800z" fill="#6e6e6e" stroke="#000" stroke-width="1.100" stroke-linejoin="round"/><circle cx="3.4" cy="5.4" r="1.9" fill="#fff" stroke="#000" stroke-width="1.100"/><circle cx="14.7" cy="10.4" r="1.9" fill="#fff" stroke="#000" stroke-width="1.100"/><circle cx="6.4" cy="16.3" r="1.9" fill="#fff" stroke="#000" stroke-width="1.100"/><circle cx="21.6" cy="15.5" r="1.9" fill="#fff" stroke="#000" stroke-width="1.100"/><circle cx="14.7" cy="22.8" r="1.9" fill="#fff" stroke="#000" stroke-width="1.100"/></g></svg>
<svg style="left:788px;top:18px" width="24" height="24" viewBox="0 0 24 24"><path d="M9.500 4.500c-2 2-2 7 0 11M17.700 4.500c2 2 2 7 0 11" stroke="#000" stroke-width="1.200" stroke-dasharray="1.500 1" fill="none"/><rect x="4.600" y="5.600" width="18" height="3.600" fill="#fff" stroke="#000" stroke-width="1.200"/><rect x="8.600" y="16.400" width="10" height="2.200" fill="#fff" stroke="#000" stroke-width="1.200"/><path d="M11.100 1.500h5.100" stroke="#000" stroke-width="1.200"/><path d="M13.600 1.500c2.400 3 2.400 12 0 20.600c-2.400-8.600-2.400-17.600 0-20.600z" fill="#3050d8" stroke="#000" stroke-width=".8"/><path d="M13.600 3v19.200" stroke="#8098f0" stroke-width=".7"/></svg>
<svg style="left:816px;top:18px" width="24" height="24" viewBox="0 0 24 24"><path d="M9.500 8c-2 3-2 9 0 13M17.700 8c2 3 2 9 0 13" stroke="#000" stroke-width="1.200" stroke-dasharray="1.500 1" fill="none"/><path d="M13.600 1.200V4.500" stroke="#000" stroke-width="1"/><path d="M13.600 3c2.400 4 2.400 13 0 19.300c-2.400-6.300-2.400-15.300 0-19.300z" fill="#3050d8" stroke="#000" stroke-width=".8"/><path d="M13.600 6v15" stroke="#8098f0" stroke-width=".7"/><rect x="8.200" y="4.400" width="10.600" height="2.100" fill="#fff" stroke="#000" stroke-width="1.200"/><rect x="4.200" y="13.800" width="18.600" height="3.600" fill="#fff" stroke="#000" stroke-width="1.200"/><path d="M11.100 22.500h5.100" stroke="#000" stroke-width="1.200"/></svg>
<svg style="left:844px;top:18px" width="24" height="24" viewBox="0 0 24 24"><path d="M13.600 6.900V9.400" stroke="#3050d8" stroke-width="1.100"/><path d="M4.100 9.400H23.100" stroke="#000" stroke-width="1.100"/><path d="M8.400 11.700H18.900" stroke="#000" stroke-width="1"/><path d="M13.600 12.400L9.400 15.700M13.600 12.400L17.800 15.700" stroke="#000" stroke-width="1.200"/><path d="M8 14.600l1.400 1.500 1.400-.9M19.200 14.600l-1.400 1.500-1.400-.9" stroke="#000" stroke-width="1.300" fill="none"/><circle cx="13.600" cy="12.500" r="2.300" fill="#9aa0b0"/><circle cx="13.600" cy="12.500" r="1" fill="#e0e0e0"/></svg>
<svg style="left:872px;top:18px" width="24" height="24" viewBox="0 0 24 24"><path d="M13.600 6.900V9.400" stroke="#3050d8" stroke-width="1.100"/><path d="M4.100 9.400H23.100" stroke="#000" stroke-width="1.100"/><path d="M8.400 11.700H18.900" stroke="#000" stroke-width="1"/><path d="M13.600 12.400L9.400 15.700M13.600 12.400L17.800 15.700" stroke="#000" stroke-width="1.200"/><path d="M8 14.600l1.400 1.500 1.400-.9M19.200 14.600l-1.400 1.500-1.400-.9" stroke="#000" stroke-width="1.300" fill="none"/><circle cx="13.600" cy="12.500" r="2.300" fill="#3050d8"/></svg>
<svg style="left:900px;top:18px" width="24" height="24" viewBox="0 0 24 24"><path d="M3.200 9.700V15.200" stroke="#000" stroke-width="1.200"/><path d="M3.800 12.200c1.500-2.200 4-3.400 7.500-3.400c2.500 0 4 1 5.500 2.400l1.800-4h4l-1.800 3.600c-.6 1.500-2 3-4.300 3.500c-4 .9-8 .9-10.500.3c-1.400-.4-2.200-1.400-2.200-2.400z" fill="#2038b8"/><path d="M7.300 10.900c1-.9 2.300-1.300 3.500-1.300v1.300zM11.500 9.600c1.500 0 2.600 .5 3.400 1.300h-3.400z" fill="#fff"/><path d="M19.400 8.400h1.800l-.8 1.600h-1.700z" fill="#8098f0"/><path d="M4.800 15.600c4 1.400 9 1.400 13.300 0" stroke="#000" stroke-width="1.300" fill="none"/><path d="M8 14.600v1.200M14.500 14.600v1.200" stroke="#000" stroke-width=".8"/></svg>
<svg style="left:928px;top:18px" width="24" height="24" viewBox="0 0 24 24"><g transform="translate(26.700 0) scale(-1 1)"><path d="M3.200 9.700V15.200" stroke="#000" stroke-width="1.200"/><path d="M3.800 12.200c1.500-2.200 4-3.400 7.500-3.400c2.500 0 4 1 5.500 2.400l1.800-4h4l-1.800 3.600c-.6 1.500-2 3-4.300 3.500c-4 .9-8 .9-10.500.3c-1.400-.4-2.200-1.400-2.200-2.400z" fill="#2038b8"/><path d="M7.300 10.900c1-.9 2.300-1.300 3.500-1.300v1.300zM11.500 9.600c1.500 0 2.600 .5 3.400 1.300h-3.400z" fill="#fff"/><path d="M19.400 8.400h1.800l-.8 1.600h-1.700z" fill="#8098f0"/><path d="M4.800 15.600c4 1.400 9 1.400 13.300 0" stroke="#000" stroke-width="1.300" fill="none"/><path d="M8 14.600v1.200M14.500 14.600v1.200" stroke="#000" stroke-width=".8"/></g></svg>
<svg style="left:963px;top:18px" width="24" height="24" viewBox="0 0 24 24"><text x=".5" y="7.600" font-family="Liberation Sans, sans-serif" font-size="8.800" fill="#000" textLength="21.500" lengthAdjust="spacingAndGlyphs">360°</text><path d="M16.500 18.800C20.500 18 22.300 16.500 22.300 15C22.300 12.500 17.500 10.600 12 10.600S1.700 12.500 1.700 15C1.700 17 4.500 18.600 8.500 19.200" fill="none" stroke="#000" stroke-width="2"/><path d="M7.400 14.500L14 18.300L8.100 22.600z" fill="#000"/></svg>
<svg style="left:991px;top:18px" width="24" height="24" viewBox="0 0 24 24"><circle cx="9.200" cy="3" r="2.100" fill="#000"/><path d="M8 6.200c2-1 4-1 5.500-.5l3 3.300.6 3-1.200.4-1-2.600-1.500-1.200-.7 4.300 3 4.600 1.800 4-1.700.9-2.200-4.200-2.700-3.400-.8 3.500-.3 5H7.700l.4-5.600 1.300-5.300.3-3.800-1.700 1.300-2.200 2.500-1.300-.9 2-3z" fill="#000"/><path d="M21 25.5H26V20.800z" fill="#6f6f6f"/></svg>
<svg style="left:1019px;top:18px" width="24" height="24" viewBox="0 0 24 24"><circle cx="18.500" cy="5.400" r="3.500" fill="#f0707a"/><path d="M3.200 12.500L12 11.400L20.700 12L12 13zM11.600 3.300L12.700 12L12.200 20.700L11.300 12z" fill="#000" stroke="#000" stroke-width=".6"/><path d="M7.500 7.500L12 12L16.500 16.500M16.500 7.500L12 12L7.500 16.500" stroke="#000" stroke-width=".7"/><path d="M8.200 9.500l2 .5-.8 1.600zM15.800 9.500l-2 .5.800 1.600zM8.200 14.800l2-.5-.8-1.600zM15.800 14.800l-2-.5.800-1.600z" fill="#000"/><path d="M21 25.5H26V20.800z" fill="#6f6f6f"/></svg>
<svg style="left:1047px;top:18px" width="24" height="24" viewBox="0 0 24 24"><circle cx="11.600" cy="11.600" r="9.300" fill="url(#gclk)" stroke="#000" stroke-width="1.100"/><path d="M18.90 11.60L20.50 11.60" stroke="#000" stroke-width=".8"/><path d="M17.92 15.25L19.31 16.05" stroke="#000" stroke-width=".8"/><path d="M15.25 17.92L16.05 19.31" stroke="#000" stroke-width=".8"/><path d="M11.60 18.90L11.60 20.50" stroke="#000" stroke-width=".8"/><path d="M7.95 17.92L7.15 19.31" stroke="#000" stroke-width=".8"/><path d="M5.28 15.25L3.89 16.05" stroke="#000" stroke-width=".8"/><path d="M4.30 11.60L2.70 11.60" stroke="#000" stroke-width=".8"/><path d="M5.28 7.95L3.89 7.15" stroke="#000" stroke-width=".8"/><path d="M7.95 5.28L7.15 3.89" stroke="#000" stroke-width=".8"/><path d="M11.60 4.30L11.60 2.70" stroke="#000" stroke-width=".8"/><path d="M15.25 5.28L16.05 3.89" stroke="#000" stroke-width=".8"/><path d="M17.92 7.95L19.31 7.15" stroke="#000" stroke-width=".8"/><path d="M11.600 10.400l1.200 1.200-1.200 1.200-1.200-1.200z" fill="#000"/></svg>
<svg style="left:4px;top:64px" width="24" height="24" viewBox="0 0 24 24"><path d="M7.300 3.700V18L11 14.500L13.700 19.900L15.900 18.800L13.200 13.400H17.500z" fill="#fff" stroke="#000" stroke-width="1.100" stroke-linejoin="miter"/></svg>
<svg style="left:32px;top:64px" width="24" height="24" viewBox="0 0 24 24"><circle cx="11.500" cy="11.400" r="2.100" fill="#fff" stroke="#000" stroke-width="1.200"/><path d="M21 25.5H26V20.800z" fill="#6f6f6f"/></svg>
<svg style="left:4px;top:92px" width="24" height="24" viewBox="0 0 24 24"><path d="M4.800 19L10 5.800L19.100 16" stroke="#000" stroke-width="1.100" fill="none"/><rect x="3.10" y="17.30" width="3.40" height="3.40" fill="#fff" stroke="#000" stroke-width="1.100"/><rect x="8.30" y="4.10" width="3.40" height="3.40" fill="#fff" stroke="#000" stroke-width="1.100"/><rect x="17.40" y="14.30" width="3.40" height="3.40" fill="#fff" stroke="#000" stroke-width="1.100"/><path d="M21 25.5H26V20.800z" fill="#6f6f6f"/></svg>
<svg style="left:32px;top:92px" width="24" height="24" viewBox="0 0 24 24"><path d="M4 6C10 4 18.500 4.500 18.500 12C18.500 19 10 19 4 17.900" stroke="#000" stroke-width="1.100" fill="none"/><rect x="2.30" y="4.30" width="3.40" height="3.40" fill="#fff" stroke="#000" stroke-width="1.100"/><rect x="16.20" y="1.20" width="3.40" height="3.40" fill="#fff" stroke="#000" stroke-width="1.100"/><rect x="2.30" y="16.20" width="3.40" height="3.40" fill="#fff" stroke="#000" stroke-width="1.100"/><rect x="18.40" y="18.40" width="3.40" height="3.40" fill="#fff" stroke="#000" stroke-width="1.100"/><path d="M21 25.5H26V20.800z" fill="#6f6f6f"/></svg>
<svg style="left:4px;top:120px" width="24" height="24" viewBox="0 0 24 24"><circle cx="11.600" cy="11.300" r="9.300" stroke="#000" stroke-width="1.100" fill="none"/><path d="M11.600 11.300L18 4.800" stroke="#000" stroke-width=".7"/><rect x="9.90" y="9.60" width="3.40" height="3.40" fill="#fff" stroke="#000" stroke-width="1.100"/><rect x="16.30" y="3.10" width="3.40" height="3.40" fill="#fff" stroke="#000" stroke-width="1.100"/><path d="M21 25.5H26V20.800z" fill="#6f6f6f"/></svg>
<svg style="left:32px;top:120px" width="24" height="24" viewBox="0 0 24 24"><ellipse cx="12" cy="12.700" rx="9.900" ry="6.700" stroke="#000" stroke-width="1.100" fill="none"/><path d="M12 5.900V12.700H21.200" stroke="#000" stroke-width=".7" fill="none"/><rect x="10.30" y="11.00" width="3.40" height="3.40" fill="#fff" stroke="#000" stroke-width="1.100"/><rect x="10.30" y="4.20" width="3.40" height="3.40" fill="#fff" stroke="#000" stroke-width="1.100"/><rect x="19.50" y="11.00" width="3.40" height="3.40" fill="#fff" stroke="#000" stroke-width="1.100"/><path d="M21 25.5H26V20.800z" fill="#6f6f6f"/></svg>
<svg style="left:4px;top:148px" width="24" height="24" viewBox="0 0 24 24"><path d="M5 4.200V20.200L19.200 12" stroke="#000" stroke-width=".6" fill="none"/><path d="M5 4.200C11 4.600 16.500 7.500 19.200 12" stroke="#000" stroke-width="1.100" fill="none"/><rect x="3.30" y="2.50" width="3.40" height="3.40" fill="#fff" stroke="#000" stroke-width="1.100"/><rect x="17.50" y="10.30" width="3.40" height="3.40" fill="#fff" stroke="#000" stroke-width="1.100"/><rect x="3.30" y="18.50" width="3.40" height="3.40" fill="#fff" stroke="#000" stroke-width="1.100"/><path d="M21 25.5H26V20.800z" fill="#6f6f6f"/></svg>
<svg style="left:32px;top:148px" width="24" height="24" viewBox="0 0 24 24"><rect x="3.700" y="6.800" width="16.700" height="10.500" stroke="#000" stroke-width="1.300" fill="none"/><rect x="18.50" y="5.30" width="3.40" height="3.40" fill="#fff" stroke="#000" stroke-width="1.100"/><rect x="2.30" y="15.20" width="3.40" height="3.40" fill="#fff" stroke="#000" stroke-width="1.100"/><path d="M21 25.5H26V20.800z" fill="#6f6f6f"/></svg>
<svg style="left:4px;top:176px" width="24" height="24" viewBox="0 0 24 24"><path d="M3.100 11.200L7.400 4.100H16.400L21.100 11.200L16.400 18.400H7.400z" stroke="#000" stroke-width="1.100" fill="none"/><path d="M12.100 11.200H19.200" stroke="#000" stroke-width=".7"/><rect x="10.40" y="9.50" width="3.40" height="3.40" fill="#fff" stroke="#000" stroke-width="1.100"/><rect x="17.50" y="9.50" width="3.40" height="3.40" fill="#fff" stroke="#000" stroke-width="1.100"/><path d="M21 25.5H26V20.800z" fill="#6f6f6f"/></svg>
<svg style="left:32px;top:176px" width="24" height="24" viewBox="0 0 24 24"><path d="M12 4.300H19.700V12" stroke="#8a8a8a" stroke-width="1" fill="none"/><path d="M4 4.100H10C16.500 4.100 19.900 8 19.900 14V19" stroke="#000" stroke-width="1.600" fill="none"/><rect x="2.30" y="2.40" width="3.40" height="3.40" fill="#fff" stroke="#000" stroke-width="1.100"/><rect x="18.20" y="17.30" width="3.40" height="3.40" fill="#fff" stroke="#000" stroke-width="1.100"/><path d="M21 25.5H26V20.800z" fill="#6f6f6f"/></svg>
<svg style="left:4px;top:204px" width="24" height="24" viewBox="0 0 24 24"><path d="M8.100 4H20.100L14.900 20L4.100 15z" fill="url(#gblue)" stroke="#000" stroke-width="1"/><path d="M14.100 4L9.500 17.500M6.100 9.500L17.500 12" stroke="#2a3a90" stroke-width=".8"/><rect x="6.40" y="2.30" width="3.40" height="3.40" fill="#fff" stroke="#000" stroke-width="1.100"/><rect x="18.40" y="2.30" width="3.40" height="3.40" fill="#fff" stroke="#000" stroke-width="1.100"/><rect x="2.40" y="13.30" width="3.40" height="3.40" fill="#fff" stroke="#000" stroke-width="1.100"/><rect x="13.20" y="18.30" width="3.40" height="3.40" fill="#fff" stroke="#000" stroke-width="1.100"/><path d="M21 25.5H26V20.800z" fill="#6f6f6f"/></svg>
<svg style="left:32px;top:204px" width="24" height="24" viewBox="0 0 24 24"><path d="M2.600 7.300L9.200 2.600C14 3 19 5 20 10.500V16.700L12.500 21.500V14.800C12 10 7 8 2.600 7.300z" fill="#fff" stroke="#000" stroke-width="1" stroke-linejoin="round"/><path d="M6.300 8.300L12.600 3.300C16.500 4.300 19.500 6.500 20 10.500V12.500L12.500 17.500V14.800C12.300 11.500 9.500 9.300 6.300 8.300z" fill="url(#gbluev)"/><path d="M2.600 7.300L9.200 2.600C14 3 19 5 20 10.500V16.700L12.500 21.500V14.800C12 10 7 8 2.600 7.300z" fill="none" stroke="#000" stroke-width="1" stroke-linejoin="round"/><path d="M21 25.5H26V20.800z" fill="#6f6f6f"/></svg>
<svg style="left:4px;top:232px" width="24" height="24" viewBox="0 0 24 24"><path d="M3.400 7.500L11.200 2.300L19.700 5.100L12.600 11.100z" fill="#9db0ff" stroke="#000" stroke-width="1.100" stroke-linejoin="round"/><path d="M3.400 7.500L12.600 11.100V20.700L3.400 17.400z" fill="#6a88f4" stroke="#000" stroke-width="1.100" stroke-linejoin="round"/><path d="M12.600 11.100L19.700 5.100V14.800L12.600 20.700z" fill="#3c58d0" stroke="#000" stroke-width="1.100" stroke-linejoin="round"/><path d="M21 25.5H26V20.800z" fill="#6f6f6f"/></svg>
<svg style="left:32px;top:232px" width="24" height="24" viewBox="0 0 24 24"><circle cx="15.800" cy="7.900" r="7" fill="url(#gbsph)" stroke="#000" stroke-width="1.100"/><path d="M9.500 6C12 8.500 17 9.500 22.500 6.500M14 1.200C12.500 5 13.500 11 17 14.700" stroke="#1a2a80" stroke-width=".8" fill="none"/><circle cx="8.200" cy="15.500" r="6.700" fill="url(#gbsph)" stroke="#000" stroke-width="1.100"/><path d="M2 14C5 16.500 10 17 14.600 14M6.500 9.200C5 13 6 18.500 9.500 22" stroke="#1a2a80" stroke-width=".8" fill="none"/><path d="M21 25.5H26V20.800z" fill="#6f6f6f"/></svg>
<svg style="left:4px;top:260px" width="24" height="24" viewBox="0 0 24 24"><ellipse cx="12.100" cy="3.900" rx="5.900" ry="2.600" fill="#f4f4f6" stroke="#000" stroke-width="1"/><path d="M1.200 9.700C8 13.500 16 13.500 23 9.700V19.200C16 22.800 8 22.800 1.200 19.200z" fill="url(#gbluev)" stroke="#000" stroke-width="1.100" stroke-linejoin="round"/><ellipse cx="12.100" cy="17.300" rx="5.600" ry="2.300" fill="#8ea6ff" stroke="#fff" stroke-width="1.500"/><path d="M21 25.5H26V20.800z" fill="#6f6f6f"/></svg>
<svg style="left:32px;top:260px" width="24" height="24" viewBox="0 0 24 24"><path d="M11.100 2.600C15 5 19 4.500 22.900 6.400C20 11 17 17 13.400 21.600C10 19.500 5 19 1.600 16.400C5 12 8 7 11.100 2.600z" fill="url(#gblue)" stroke="#000" stroke-width="1.100"/><path d="M7.500 8C11 10 15 10 18.800 12.200M4.500 12.300C8 14.500 12 14.500 16 16.800M15.500 4.200C12.500 9 9.500 14 6.500 18.500M19.200 5.200C16.500 10 13.500 15 10 20" stroke="#1c2e98" stroke-width=".8" fill="none"/><path d="M21 25.5H26V20.800z" fill="#6f6f6f"/></svg>
<svg style="left:4px;top:288px" width="24" height="24" viewBox="0 0 24 24"><g transform="translate(8.300 8.600) rotate(-30) scale(1.28)"><path d="M-4 -4H-1.500a1.500 1.700 0 0 1 3 0H4V-1.400a1.400 1.500 0 0 0 0 2.800V4H1.400a1.400 1.500 0 0 0 -2.800 0H-4V1.500a1.700 1.500 0 0 1 0 -3z" fill="url(#gorg)" stroke="#000" stroke-width=".8"/></g><g transform="translate(16.300 16.400) rotate(150) scale(1.28)"><path d="M-4 -4H-1.500a1.500 1.700 0 0 1 3 0H4V-1.400a1.400 1.500 0 0 0 0 2.800V4H1.400a1.400 1.500 0 0 0 -2.800 0H-4V1.500a1.700 1.500 0 0 1 0 -3z" fill="#fff" stroke="#000" stroke-width="1"/></g><path d="M21 25.5H26V20.800z" fill="#6f6f6f"/></svg>
<svg style="left:32px;top:288px" width="24" height="24" viewBox="0 0 24 24"><path d="M1.100 22.900L4.400 3.500L5.900 14.800L19.100 3L13.600 15.800L22.900 17.200L15.300 19.600L16.500 22.900z" fill="url(#gexp)" stroke="#000" stroke-width=".5"/><path d="M4.400 3.500L5.900 14.800L19.100 3" fill="none" stroke="#000" stroke-width="1"/></svg>
<svg style="left:4px;top:316px" width="24" height="24" viewBox="0 0 24 24"><rect x="1.300" y="11.400" width="10.300" height="5.100" fill="#fff" stroke="#000" stroke-width="1.100"/><path d="M15.400 13.100L21.100 18.300L17.300 22.100L12.100 16.900z" fill="#f4f4f6" stroke="#000" stroke-width="1.100"/><path d="M11.200 3.200H18.200L12.600 16H11.200z" fill="#14227c"/></svg>
<svg style="left:32px;top:316px" width="24" height="24" viewBox="0 0 24 24"><rect x="2.400" y="13.700" width="18.400" height="4.600" fill="#fff" stroke="#000" stroke-width="1.100"/><path d="M12 5.100H19.100L13.400 18.300H12z" fill="#14227c"/></svg>
<svg style="left:4px;top:344px" width="24" height="24" viewBox="0 0 24 24"><circle cx="12.100" cy="8.300" r="4.900" fill="#000"/><circle cx="8.200" cy="14.600" r="4.900" fill="#000"/><circle cx="16.400" cy="14.600" r="4.900" fill="#000"/><circle cx="12.100" cy="8.500" r="3.300" fill="#6684fc"/><circle cx="8.200" cy="14.600" r="3.100" fill="#fff"/><circle cx="16.300" cy="14.500" r="3.100" fill="#14227c"/><path d="M21 25.5H26V20.800z" fill="#6f6f6f"/></svg>
<svg style="left:32px;top:344px" width="24" height="24" viewBox="0 0 24 24"><circle cx="12" cy="7.800" r="3.500" fill="#6684fc" stroke="#000" stroke-width="1"/><circle cx="6.800" cy="16.100" r="3.500" fill="#fff" stroke="#000" stroke-width="1"/><circle cx="17.200" cy="16.100" r="3.500" fill="#14227c" stroke="#000" stroke-width="1"/></svg>
<svg style="left:4px;top:372px" width="24" height="24" viewBox="0 0 24 24"><path d="M1.300 7.600C10 6.500 17 13 17.400 22.300" stroke="#000" stroke-width="1.700" fill="none"/><rect x="5.40" y="5.60" width="3.00" height="3.00" fill="#fff" stroke="#000" stroke-width="1.100"/><rect x="15.50" y="15.70" width="3.00" height="3.00" fill="#fff" stroke="#000" stroke-width="1.100"/></svg>
<svg style="left:32px;top:372px" width="24" height="24" viewBox="0 0 24 24"><path d="M1.100 3.300H9.200L21 15V22.800" stroke="#000" stroke-width="1.200" stroke-dasharray="1.200 1.200" fill="none"/><path d="M1.100 7.500C10 6.300 16.700 13 16.700 22.300" stroke="#000" stroke-width="1.900" fill="none"/><rect x="7.70" y="1.50" width="3.00" height="3.00" fill="#fff" stroke="#000" stroke-width="1.100"/><rect x="19.50" y="13.50" width="3.00" height="3.00" fill="#fff" stroke="#000" stroke-width="1.100"/><path d="M21 25.5H26V20.800z" fill="#6f6f6f"/></svg>
<svg style="left:4px;top:400px" width="24" height="24" viewBox="0 0 24 24"><path d="M4.300 2.600L19.400 6.700L18.700 11.700L16.200 10.200L14.300 9.200L15.300 19.400L17.700 21.200L17.300 22.600L7.600 20.200L7.800 18.700L10.300 18.300L9.600 7.900L7 8L5 9.300L3.200 8.600z" fill="#2a40b8" stroke="#000" stroke-width=".6" stroke-linejoin="round"/><path d="M4.300 2.100L18.500 5.700L18 10.700L16 9.200L13.500 8.200L14.400 18.400L16.800 20.200L16.400 21.600L7.200 19.400L7.400 17.900L9.900 17.500L9.300 7.100L6.600 7.200L4.600 8.500L3.300 8z" fill="#6f8cff" stroke="#1a2a90" stroke-width=".6" stroke-linejoin="round"/></svg>
<svg style="left:32px;top:400px" width="24" height="24" viewBox="0 0 24 24"><rect x="3.500" y="14.600" width="6.100" height="6.100" fill="#f2f2f2" stroke="#000" stroke-width="1.100"/><rect x="15.800" y="2.300" width="6.100" height="6" fill="#7e98ff" stroke="#000" stroke-width="1.100"/><path d="M9.600 14.600L14.300 9.900" stroke="#000" stroke-width="1.100"/><path d="M11.900 9.300L15 9.200L14.900 12.300" stroke="#000" stroke-width="1.100" fill="none"/><path d="M21 25.5H26V20.800z" fill="#6f6f6f"/></svg>
<svg style="left:4px;top:428px" width="24" height="24" viewBox="0 0 24 24"><rect x="3.6" y="2.6" width="6.10" height="5.70" fill="#7e98ff" stroke="#000" stroke-width="1.100"/><rect x="15.4" y="5.5" width="6.20" height="5.70" fill="#7e98ff" stroke="#000" stroke-width="1.100"/><rect x="11.6" y="8.3" width="6.00" height="6.00" fill="#7e98ff" stroke="#000" stroke-width="1.100"/><rect x="3.6" y="14.5" width="6.10" height="5.80" fill="#f4f4f4" stroke="#000" stroke-width="1.100"/><rect x="15.4" y="16.8" width="6.20" height="5.70" fill="#7e98ff" stroke="#000" stroke-width="1.100"/></svg>
<svg style="left:32px;top:428px" width="24" height="24" viewBox="0 0 24 24"><rect x="1.400" y="2.700" width="5.200" height="13.700" fill="#f0f0f0" stroke="#000" stroke-width="1.100"/><path d="M19.600 7.400L22.900 10.700L12.500 20.600L9.200 17.300z" fill="#6a88f8" stroke="#000" stroke-width="1.100"/><path d="M6.600 3.700C10.500 3.500 13.800 5.300 15.800 8.400" stroke="#000" stroke-width="1" fill="none"/><path d="M12.900 8.200L16 8.700L16.100 5.600" stroke="#000" stroke-width="1" fill="none"/></svg>
<svg style="left:4px;top:456px" width="24" height="24" viewBox="0 0 24 24"><path d="M3.600 8.200L11.200 2.600L20.600 4.900L14 10.600z" fill="#9db0ff" stroke="#000" stroke-width="1.100" stroke-linejoin="round"/><path d="M3.600 8.200L14 10.600V21.500L3.600 17.700z" fill="#5a7af0" stroke="#000" stroke-width="1.100" stroke-linejoin="round"/><path d="M14 10.600L20.600 4.900V14.800L14 21.500z" fill="#3454cc" stroke="#000" stroke-width="1.100" stroke-linejoin="round"/><path d="M8.900 15.300L13.600 16.600L16.400 14V19L14 21.400L8.900 19.600z" fill="#fff" stroke="#000" stroke-width=".7"/><path d="M13.600 16.600V21.200" stroke="#888" stroke-width=".6"/><path d="M21 25.5H26V20.800z" fill="#6f6f6f"/></svg>
<svg style="left:32px;top:456px" width="24" height="24" viewBox="0 0 24 24"><path d="M5.900 13.900H22.900L18.600 18.200H1.100z" fill="#6f8cff" stroke="#000" stroke-width="1"/><path d="M5.9 15.600V6.500" stroke="#8a8480" stroke-width="1.400"/><path d="M5.9 3.300l2.200 3.600h-4.400z" fill="#8a8480"/><path d="M12 15.600V6.500" stroke="#8a8480" stroke-width="1.400"/><path d="M12 3.300l2.200 3.600h-4.400z" fill="#8a8480"/><path d="M18.2 15.600V6.500" stroke="#8a8480" stroke-width="1.400"/><path d="M18.2 3.300l2.200 3.600h-4.400z" fill="#8a8480"/><path d="M21 25.5H26V20.800z" fill="#6f6f6f"/></svg>
<svg style="left:4px;top:484px" width="24" height="24" viewBox="0 0 24 24"><rect x="2.4" y="2.1999999999999997" width="4.20" height="4.20" fill="#7e98ff" stroke="#000" stroke-width="1.100"/><rect x="9.4" y="2.1999999999999997" width="4.20" height="4.20" fill="#7e98ff" stroke="#000" stroke-width="1.100"/><rect x="16.4" y="2.1999999999999997" width="4.20" height="4.20" fill="#7e98ff" stroke="#000" stroke-width="1.100"/><rect x="2.4" y="9.200000000000001" width="4.20" height="4.20" fill="#7e98ff" stroke="#000" stroke-width="1.100"/><rect x="9.4" y="9.200000000000001" width="4.20" height="4.20" fill="#7e98ff" stroke="#000" stroke-width="1.100"/><rect x="16.4" y="9.200000000000001" width="4.20" height="4.20" fill="#7e98ff" stroke="#000" stroke-width="1.100"/><rect x="2.4" y="16.2" width="4.20" height="4.20" fill="#fff" stroke="#000" stroke-width="1.100"/><rect x="9.4" y="16.2" width="4.20" height="4.20" fill="#7e98ff" stroke="#000" stroke-width="1.100"/><rect x="16.4" y="16.2" width="4.20" height="4.20" fill="#7e98ff" stroke="#000" stroke-width="1.100"/><path d="M21 25.5H26V20.800z" fill="#6f6f6f"/></svg>
<svg style="left:32px;top:484px" width="24" height="24" viewBox="0 0 24 24"><rect x="7.5" y="2.4" width="9.30" height="4.70" fill="#f6f6f6" stroke="#000" stroke-width="1.100"/><rect x="9.6" y="9.4" width="5.00" height="4.10" fill="#f6f6f6" stroke="#000" stroke-width="1.100"/><rect x="8.3" y="15.7" width="7.60" height="5.70" fill="#f6f6f6" stroke="#000" stroke-width="1.100"/><path d="M12 1.200V22.700" stroke="#d80000" stroke-width="1.400"/><path d="M21 25.5H26V20.800z" fill="#6f6f6f"/></svg>
<svg style="left:4px;top:512px" width="24" height="24" viewBox="0 0 24 24"><path d="M3.200 5.500L6.300 3.800L10.500 5L9.400 18.800L3.800 16.200z" fill="#f4f4f4" stroke="#000" stroke-width="1"/><path d="M10 2.200L13 1.600L17 4L11.500 6z" fill="#fff" stroke="#000" stroke-width=".9"/><path d="M12 5.500L19.600 7.200L15.500 20L8.800 17.600z" fill="url(#gblue)" stroke="#000" stroke-width="1"/><path d="M12 5.500L14.500 3.500L20.300 5L19.600 7.200z" fill="#aebcff" stroke="#000" stroke-width=".9"/><path d="M21 25.5H26V20.800z" fill="#6f6f6f"/></svg>
<svg style="left:32px;top:512px" width="24" height="24" viewBox="0 0 24 24"><rect x="7.600" y="1.700" width="2.800" height="20.200" fill="#7e98ff" stroke="#000" stroke-width="1"/><circle cx="2" cy="6.900" r="1.800" fill="#000"/><circle cx="16" cy="6.900" r="1.800" fill="#000"/><path d="M1.500 9.500L7.300 9.800V12L4.500 12.300L5 14.500L7.500 14.800V16.600L3 16.200L1.300 10.500z" fill="#000"/><path d="M10.600 9.200L17 10L20.500 13.200L19 15L20.800 17.800" stroke="#000" stroke-width="2" fill="none"/><path d="M10.500 13L13 13.500" stroke="#000" stroke-width="1.600"/><path d="M19 15L22.500 20.500" stroke="#333" stroke-width=".9"/><path d="M23 21.500l-3-.8 2-1.800z" fill="#333"/><path d="M21 25.5H26V20.800z" fill="#6f6f6f"/></svg>
<svg style="left:4px;top:540px" width="24" height="24" viewBox="0 0 24 24"><path d="M2.300 14.200L6.100 12.900L9.300 17.900C12 12 16 6.500 20.700 2.800L22 3.500C17 9 13 15 9.900 21.400H6.800C5.500 18.500 4 16 2.300 14.200z" fill="#000"/><path d="M21 25.5H26V20.800z" fill="#6f6f6f"/></svg>
<svg style="left:32px;top:540px" width="24" height="24" viewBox="0 0 24 24"><path d="M2.200 7.200L6.300 4.100L12 5.300L11.900 14.200L7.600 16.700L2.700 13.800z" fill="#d9d9d9" stroke="#000" stroke-width="1"/><path d="M2.200 7.200L7.800 8.600L12 5.300M7.800 8.600L7.600 16.700" stroke="#000" stroke-width=".8" fill="none"/><path d="M7.800 8.600L12 5.300L11.900 14.200L7.600 16.700z" fill="#8c8c8c"/><path d="M16.800 5.600L12.300 16C12.500 18.500 21.500 18.500 21.800 16z" fill="url(#gcone)" stroke="#000" stroke-width="1" stroke-linejoin="round"/><path d="M21 25.5H26V20.800z" fill="#6f6f6f"/></svg>
<svg style="left:4px;top:568px" width="24" height="24" viewBox="0 0 24 24"><rect x="21.300" y="2" width="1.800" height="5.200" fill="#000"/><path d="M21.300 2.500H17L9.600 6.500L10.500 8.300L15.500 9L18.500 6.800H21.300z" fill="#fafafa" stroke="#555" stroke-width=".5"/><path d="M9.600 6.500L14 4.800L17.500 6.200L15.500 9L10.500 8.300z" fill="#a0a0a0"/><path d="M11.200 10.300L3.600 18.500L12.500 22.300z" fill="#f4d060" stroke="#000" stroke-width=".6" stroke-linejoin="round"/><path d="M11.200 10.300L12.500 22.300L20.100 17.200z" fill="#c89820" stroke="#000" stroke-width=".6" stroke-linejoin="round"/><path d="M21 25.5H26V20.800z" fill="#6f6f6f"/></svg>
<svg style="left:0;top:0" width="1926" height="931" viewBox="0 0 1926 931"><polyline points="653.0,89.6 647.0,112.0 632.0,186.6 622.8,260.6 617.6,334.3 615.4,372.0 615.4,446.0 618.5,482.6 624.6,557.4 637.8,631.1 662.0,705.5 695.4,779.5 712.3,809.8" fill="none" stroke="#e80000" stroke-width="1.2" shape-rendering="crispEdges"/><path d="M653.0 89.6C652.0 93.3 650.5 95.8 647.0 112.0C643.5 128.2 636.2 161.8 632.3 186.6C628.3 211.4 625.6 236.0 623.3 260.6C621.0 285.2 619.7 309.6 618.7 334.3C617.8 359.1 617.6 384.4 617.6 409.1C617.6 433.8 617.5 457.9 618.7 482.6C620.0 507.3 621.8 532.6 625.1 557.4C628.4 582.1 632.1 606.4 638.3 631.1C644.5 655.8 652.8 680.8 662.4 705.5C672.0 730.2 687.3 762.1 695.6 779.5C703.9 796.9 709.5 804.8 712.3 809.8" fill="none" stroke="#000" stroke-width="1"/><polyline points="712.3,87.5 712.3,92.0" fill="none" stroke="#e80000" stroke-width="1.2" shape-rendering="crispEdges"/><polyline points="712.4,152.0 712.4,157.0 710.4,164.0 709.2,192.0 706.9,310.0 706.4,420.0 707.0,500.0 708.1,530.0 710.4,626.6 711.4,723.2 711.7,809.8" fill="none" stroke="#e80000" stroke-width="1.2" shape-rendering="crispEdges"/><polyline points="710.2,149.7 710.2,161.5 708.7,192.0 707.1,223.4 705.8,253.6 704.8,284.5 704.0,315.2 703.5,345.6 702.7,376.6 702.5,407.0 702.4,438.5 702.4,468.4 702.7,499.1 703.3,529.5 704.3,560.3 705.2,591.2 706.2,621.8 706.9,652.3 707.5,682.9 707.5,713.8 707.5,744.4 707.8,775.0 706.6,798.0 712.3,809.8" fill="none" stroke="#000" stroke-width="1" shape-rendering="crispEdges"/><path d="M653 89.6 L680.6 87.5 L712.3 87.5" fill="none" stroke="#000" stroke-width="1"/><path d="M652.3 92.5C652.3 92.8 652.1 93.3 652.6 94.5C653.1 95.7 653.6 97.8 655.5 99.5C657.4 101.2 660.3 103.0 663.7 104.6C667.1 106.2 671.3 107.8 675.9 109.2C680.5 110.6 686.6 111.7 691.2 112.8C695.8 113.9 700.4 114.7 703.5 115.8C706.6 116.9 709.0 118.8 710.1 119.4" fill="none" stroke="#000" stroke-width="1.5"/><path d="M710.1 119.4C709.8 119.9 709.0 120.7 708.4 122.5C707.8 124.3 706.7 127.1 706.6 130.1C706.5 133.1 707.0 137.2 707.6 140.3C708.2 143.4 709.7 147.1 710.1 148.5" fill="none" stroke="#000" stroke-width="1.1"/><path d="M712.5 123 L712.5 134 L713.3 138.5" fill="none" stroke="#000" stroke-width="1"/><path d="M709.7 120 L709.7 149.7" fill="none" stroke="#000" stroke-width="1"/><line x1="647" y1="112.5" x2="687.5" y2="112.5" stroke="#e80000" stroke-width="1" shape-rendering="crispEdges"/><line x1="642.7" y1="131.5" x2="708.2" y2="131.5" stroke="#000" stroke-width="1" shape-rendering="crispEdges"/><line x1="636.2" y1="161.5" x2="710.2" y2="161.5" stroke="#000" stroke-width="1" shape-rendering="crispEdges"/><line x1="632.3" y1="186.5" x2="708.2" y2="186.5" stroke="#e80000" stroke-width="1" shape-rendering="crispEdges"/><line x1="631.6" y1="192.7" x2="708.7" y2="192" stroke="#000" stroke-width="1" shape-rendering="crispEdges"/><line x1="626.4" y1="223.7" x2="707.1" y2="223.4" stroke="#000" stroke-width="1" shape-rendering="crispEdges"/><line x1="621.3" y1="253.5" x2="705.8" y2="253.5" stroke="#000" stroke-width="1" shape-rendering="crispEdges"/><line x1="623.3" y1="260.5" x2="705.6" y2="260.5" stroke="#e80000" stroke-width="1" shape-rendering="crispEdges"/><line x1="621.3" y1="284.5" x2="704.8" y2="284.5" stroke="#00e000" stroke-width="1" shape-rendering="crispEdges"/><line x1="616.1" y1="315.5" x2="704" y2="315.5" stroke="#000" stroke-width="1" shape-rendering="crispEdges"/><line x1="618.7" y1="334.5" x2="703" y2="334.5" stroke="#e80000" stroke-width="1" shape-rendering="crispEdges"/><line x1="614.3" y1="345.5" x2="703.5" y2="345.5" stroke="#000" stroke-width="1" shape-rendering="crispEdges"/><line x1="614.3" y1="376.5" x2="702.7" y2="376.5" stroke="#000" stroke-width="1" shape-rendering="crispEdges"/><line x1="613.5" y1="407.8" x2="702.5" y2="407" stroke="#000" stroke-width="1" shape-rendering="crispEdges"/><line x1="617.6" y1="409.5" x2="702.5" y2="409.5" stroke="#e80000" stroke-width="1" shape-rendering="crispEdges"/><line x1="614.3" y1="438.5" x2="702" y2="438.5" stroke="#000" stroke-width="1" shape-rendering="crispEdges"/><line x1="615.3" y1="468.5" x2="702" y2="468.5" stroke="#000" stroke-width="1" shape-rendering="crispEdges"/><line x1="618.7" y1="483.5" x2="702" y2="483.5" stroke="#e80000" stroke-width="1" shape-rendering="crispEdges"/><line x1="620" y1="499.5" x2="702.7" y2="499.5" stroke="#00e000" stroke-width="1" shape-rendering="crispEdges"/><line x1="622" y1="530.3" x2="703.3" y2="529.5" stroke="#000" stroke-width="1" shape-rendering="crispEdges"/><line x1="625.1" y1="557.5" x2="704.3" y2="557.5" stroke="#e80000" stroke-width="1" shape-rendering="crispEdges"/><line x1="627.3" y1="560.5" x2="704.3" y2="560.5" stroke="#f08000" stroke-width="1" shape-rendering="crispEdges"/><line x1="630.5" y1="591.5" x2="705.2" y2="591.5" stroke="#a040f0" stroke-width="1" shape-rendering="crispEdges"/><line x1="636.7" y1="622.4" x2="706.2" y2="621.8" stroke="#000" stroke-width="1" shape-rendering="crispEdges"/><line x1="638.3" y1="631.5" x2="706.5" y2="631.5" stroke="#e80000" stroke-width="1" shape-rendering="crispEdges"/><line x1="644.4" y1="653" x2="706.9" y2="652.3" stroke="#000" stroke-width="1" shape-rendering="crispEdges"/><line x1="653.7" y1="683.3" x2="707.5" y2="682.9" stroke="#000" stroke-width="1" shape-rendering="crispEdges"/><line x1="662.4" y1="706.5" x2="707.5" y2="706.5" stroke="#e80000" stroke-width="1" shape-rendering="crispEdges"/><line x1="665" y1="714.2" x2="707.5" y2="713.8" stroke="#000" stroke-width="1" shape-rendering="crispEdges"/><line x1="678.2" y1="744.7" x2="707.5" y2="744.4" stroke="#000" stroke-width="1" shape-rendering="crispEdges"/><line x1="692.7" y1="775.3" x2="707.8" y2="775" stroke="#f08000" stroke-width="1" shape-rendering="crispEdges"/><line x1="695.6" y1="780.5" x2="706.2" y2="780.5" stroke="#e80000" stroke-width="1" shape-rendering="crispEdges"/><circle cx="653.35" cy="89.95" r="3.250" fill="#000"/><circle cx="652.85" cy="89.45" r="2.350" fill="#fff"/><circle cx="647.35" cy="112.35" r="3.250" fill="#000"/><circle cx="646.85" cy="111.85" r="2.350" fill="#fff"/><circle cx="632.65" cy="186.95" r="3.250" fill="#000"/><circle cx="632.15" cy="186.45" r="2.350" fill="#fff"/><circle cx="623.65" cy="260.95" r="3.250" fill="#000"/><circle cx="623.15" cy="260.45" r="2.350" fill="#fff"/><circle cx="619.05" cy="334.65" r="3.250" fill="#000"/><circle cx="618.55" cy="334.15" r="2.350" fill="#fff"/><circle cx="617.95" cy="409.45" r="3.250" fill="#000"/><circle cx="617.45" cy="408.95" r="2.350" fill="#fff"/><circle cx="619.05" cy="482.95" r="3.250" fill="#000"/><circle cx="618.55" cy="482.45" r="2.350" fill="#fff"/><circle cx="625.45" cy="557.75" r="3.250" fill="#000"/><circle cx="624.95" cy="557.25" r="2.350" fill="#fff"/><circle cx="638.65" cy="631.45" r="3.250" fill="#000"/><circle cx="638.15" cy="630.95" r="2.350" fill="#fff"/><circle cx="662.75" cy="705.85" r="3.250" fill="#000"/><circle cx="662.25" cy="705.35" r="2.350" fill="#fff"/><circle cx="695.95" cy="779.85" r="3.250" fill="#000"/><circle cx="695.45" cy="779.35" r="2.350" fill="#fff"/><circle cx="712.65" cy="810.15" r="3.250" fill="#000"/><circle cx="712.15" cy="809.65" r="2.350" fill="#fff"/><circle cx="710.55" cy="150.05" r="3.250" fill="#000"/><circle cx="710.05" cy="149.55" r="2.350" fill="#fff"/><circle cx="710.55" cy="161.85" r="3.250" fill="#000"/><circle cx="710.05" cy="161.35" r="2.350" fill="#fff"/><circle cx="709.05" cy="192.35" r="3.250" fill="#000"/><circle cx="708.55" cy="191.85" r="2.350" fill="#fff"/><circle cx="707.45" cy="223.75" r="3.250" fill="#000"/><circle cx="706.95" cy="223.25" r="2.350" fill="#fff"/><circle cx="706.15" cy="253.95" r="3.250" fill="#000"/><circle cx="705.65" cy="253.45" r="2.350" fill="#fff"/><circle cx="705.15" cy="284.85" r="3.250" fill="#000"/><circle cx="704.65" cy="284.35" r="2.350" fill="#fff"/><circle cx="704.35" cy="315.55" r="3.250" fill="#000"/><circle cx="703.85" cy="315.05" r="2.350" fill="#fff"/><circle cx="703.85" cy="345.95" r="3.250" fill="#000"/><circle cx="703.35" cy="345.45" r="2.350" fill="#fff"/><circle cx="703.05" cy="376.95" r="3.250" fill="#000"/><circle cx="702.55" cy="376.45" r="2.350" fill="#fff"/><circle cx="702.85" cy="407.35" r="3.250" fill="#000"/><circle cx="702.35" cy="406.85" r="2.350" fill="#fff"/><circle cx="702.75" cy="438.85" r="3.250" fill="#000"/><circle cx="702.25" cy="438.35" r="2.350" fill="#fff"/><circle cx="702.75" cy="468.75" r="3.250" fill="#000"/><circle cx="702.25" cy="468.25" r="2.350" fill="#fff"/><circle cx="703.05" cy="499.45" r="3.250" fill="#000"/><circle cx="702.55" cy="498.95" r="2.350" fill="#fff"/><circle cx="703.65" cy="529.85" r="3.250" fill="#000"/><circle cx="703.15" cy="529.35" r="2.350" fill="#fff"/><circle cx="704.65" cy="560.65" r="3.250" fill="#000"/><circle cx="704.15" cy="560.15" r="2.350" fill="#fff"/><circle cx="705.55" cy="591.55" r="3.250" fill="#000"/><circle cx="705.05" cy="591.05" r="2.350" fill="#fff"/><circle cx="706.55" cy="622.15" r="3.250" fill="#000"/><circle cx="706.05" cy="621.65" r="2.350" fill="#fff"/><circle cx="707.25" cy="652.65" r="3.250" fill="#000"/><circle cx="706.75" cy="652.15" r="2.350" fill="#fff"/><circle cx="707.85" cy="683.25" r="3.250" fill="#000"/><circle cx="707.35" cy="682.75" r="2.350" fill="#fff"/><circle cx="707.85" cy="714.15" r="3.250" fill="#000"/><circle cx="707.35" cy="713.65" r="2.350" fill="#fff"/><circle cx="707.85" cy="744.75" r="3.250" fill="#000"/><circle cx="707.35" cy="744.25" r="2.350" fill="#fff"/><circle cx="708.15" cy="775.35" r="3.250" fill="#000"/><circle cx="707.65" cy="774.85" r="2.350" fill="#fff"/><path d="M105.5 766V796.5H135" fill="none" stroke="#555" stroke-width="1.2"/><text x="107.6" y="764.5" font-family="Liberation Sans, sans-serif" font-size="12.5" fill="#555">y</text><text x="137.5" y="796.8" font-family="Liberation Sans, sans-serif" font-size="13" fill="#555">x</text></svg>
<span class="t" style="left:76.00px;top:55.04px;font-size:12px;color:#222;letter-spacing:0.015px;font-weight:700;">Top</span>
<span class="t" style="left:78.20px;top:836.34px;font-size:12px;color:#6b6b6b;letter-spacing:-0.312px;">Perspective</span>
<span class="t" style="left:153.40px;top:836.34px;font-size:12px;color:#222;letter-spacing:-0.187px;">Top</span>
<span class="t" style="left:188.30px;top:836.34px;font-size:12px;color:#6b6b6b;letter-spacing:-0.168px;">Front</span>
<span class="t" style="left:231.20px;top:836.34px;font-size:12px;color:#6b6b6b;letter-spacing:-0.170px;">Right</span>
<span class="t" style="left:1723.00px;top:53.34px;font-size:12px;color:#6b6b6b;letter-spacing:-0.105px;">Properties: Viewport</span>
<span class="t" style="left:31.60px;top:857.84px;font-size:12px;color:#222;letter-spacing:-0.470px;">Osnap</span>
<span class="t" style="left:85.80px;top:857.84px;font-size:12px;color:#6b6b6b;letter-spacing:-0.179px;">Selection Filters</span>
<span class="t" style="left:22.40px;top:0.44px;font-size:12px;color:#6b6b6b;letter-spacing:-0.176px;">Standard</span>
<span class="t" style="left:89.70px;top:0.44px;font-size:12px;color:#6b6b6b;letter-spacing:-0.710px;">CPlanes</span>
<span class="t" style="left:151.60px;top:0.44px;font-size:12px;color:#222;letter-spacing:-0.396px;">Set View</span>
<span class="t" style="left:216.60px;top:0.44px;font-size:12px;color:#6b6b6b;letter-spacing:-0.224px;">Display</span>
<span class="t" style="left:274.80px;top:0.44px;font-size:12px;color:#6b6b6b;letter-spacing:-0.584px;">Select</span>
<span class="t" style="left:326.40px;top:0.44px;font-size:12px;color:#6b6b6b;letter-spacing:-0.007px;">Viewport Layout</span>
<span class="t" style="left:432.90px;top:0.44px;font-size:12px;color:#6b6b6b;letter-spacing:0.053px;">Visibility</span>
<span class="t" style="left:496.70px;top:0.44px;font-size:12px;color:#6b6b6b;letter-spacing:-0.256px;">Curve Tools</span>
<span class="t" style="left:577.70px;top:0.44px;font-size:12px;color:#6b6b6b;letter-spacing:-0.300px;">Surface Tools</span>
<span class="t" style="left:667.00px;top:0.44px;font-size:12px;color:#6b6b6b;letter-spacing:-0.241px;">SubD Tools</span>
<span class="t" style="left:746.60px;top:0.44px;font-size:12px;color:#6b6b6b;letter-spacing:-0.221px;">Mesh Tools</span>
<span class="t" style="left:825.90px;top:0.44px;font-size:12px;color:#6b6b6b;letter-spacing:-0.328px;">Render Tools</span>
<span class="t" style="left:913.80px;top:0.44px;font-size:12px;color:#6b6b6b;letter-spacing:0.165px;">Drafting</span>
<span class="t" style="left:977.10px;top:0.44px;font-size:12px;color:#6b6b6b;letter-spacing:-0.177px;">New in V8</span>
<span class="t" style="left:1722.80px;top:120.18px;font-size:13.33px;color:#222;letter-spacing:0.256px;">Viewport</span>
<span class="t" style="left:1738.30px;top:142.34px;font-size:12px;color:#1f1f1f;letter-spacing:0.087px;">Title</span>
<span class="t" style="left:1820.50px;top:142.34px;font-size:12px;color:#1f1f1f;letter-spacing:-0.387px;">Top</span>
<span class="t" style="left:1738.30px;top:163.24px;font-size:12px;color:#1f1f1f;letter-spacing:0.325px;">Width</span>
<span class="t" style="left:1821.00px;top:163.24px;font-size:12px;color:#1f1f1f;letter-spacing:-1.200px;">1645</span>
<span class="t" style="left:1738.30px;top:183.34px;font-size:12px;color:#1f1f1f;letter-spacing:0.049px;">Height</span>
<span class="t" style="left:1820.50px;top:183.34px;font-size:12px;color:#1f1f1f;letter-spacing:-1.200px;">778</span>
<span class="t" style="left:1738.30px;top:203.84px;font-size:12px;color:#1f1f1f;letter-spacing:0.068px;">Projection</span>
<span class="t" style="left:1820.50px;top:203.84px;font-size:12px;color:#1f1f1f;letter-spacing:-0.293px;">Parallel</span>
<span class="t" style="left:1738.30px;top:226.34px;font-size:12px;color:#1f1f1f;letter-spacing:-0.120px;">Display mode</span>
<span class="t" style="left:1820.50px;top:226.34px;font-size:12px;color:#1f1f1f;letter-spacing:-0.120px;width:52.30px;overflow:hidden;">Wireframe</span>
<span class="t" style="left:1738.30px;top:246.84px;font-size:12px;color:#1f1f1f;letter-spacing:-0.144px;">Locked</span>
<span class="t" style="left:1722.80px;top:268.68px;font-size:13.33px;color:#222;letter-spacing:-0.458px;">Camera</span>
<span class="t" style="left:1738.30px;top:290.44px;font-size:12px;color:#1f1f1f;letter-spacing:-0.168px;">Lens Length (i</span>
<span class="t" style="left:1820.50px;top:290.44px;font-size:12px;color:#a9a9a9;letter-spacing:-0.819px;">20548.074</span>
<span class="t" style="left:1738.30px;top:310.34px;font-size:12px;color:#1f1f1f;letter-spacing:0.026px;">Rotation</span>
<span class="t" style="left:1820.50px;top:310.34px;font-size:12px;color:#1f1f1f;letter-spacing:-1.200px;">0.0</span>
<span class="t" style="left:1738.30px;top:330.34px;font-size:12px;color:#1f1f1f;letter-spacing:-0.093px;">X Location</span>
<span class="t" style="left:1820.50px;top:330.34px;font-size:12px;color:#1f1f1f;letter-spacing:-0.906px;">19.910</span>
<span class="t" style="left:1738.30px;top:350.34px;font-size:12px;color:#1f1f1f;letter-spacing:-0.093px;">Y Location</span>
<span class="t" style="left:1820.50px;top:350.34px;font-size:12px;color:#1f1f1f;letter-spacing:-0.867px;">230.715</span>
<span class="t" style="left:1738.30px;top:370.34px;font-size:12px;color:#1f1f1f;letter-spacing:-0.018px;">Z Location</span>
<span class="t" style="left:1820.50px;top:370.34px;font-size:12px;color:#1f1f1f;letter-spacing:-0.819px;">43387.229</span>
<span class="t" style="left:1738.30px;top:390.44px;font-size:12px;color:#1f1f1f;letter-spacing:-0.243px;">Distance to Ta</span>
<span class="t" style="left:1820.50px;top:390.44px;font-size:12px;color:#1f1f1f;letter-spacing:-0.819px;">43387.229</span>
<span class="t" style="left:1738.30px;top:413.54px;font-size:12px;color:#1f1f1f;letter-spacing:0.072px;">Location</span>
<span class="t" style="left:1834.30px;top:413.54px;font-size:12px;color:#1f1f1f;letter-spacing:-0.484px;">Place...</span>
<span class="t" style="left:1722.80px;top:438.18px;font-size:13.33px;color:#222;letter-spacing:-0.348px;">Target</span>
<span class="t" style="left:1738.30px;top:459.84px;font-size:12px;color:#1f1f1f;letter-spacing:-0.379px;">X Target</span>
<span class="t" style="left:1820.50px;top:459.84px;font-size:12px;color:#1f1f1f;letter-spacing:-0.906px;">19.910</span>
<span class="t" style="left:1738.30px;top:479.84px;font-size:12px;color:#1f1f1f;letter-spacing:-0.379px;">Y Target</span>
<span class="t" style="left:1820.50px;top:479.84px;font-size:12px;color:#1f1f1f;letter-spacing:-0.867px;">230.715</span>
<span class="t" style="left:1738.30px;top:499.84px;font-size:12px;color:#1f1f1f;letter-spacing:-0.283px;">Z Target</span>
<span class="t" style="left:1820.50px;top:499.84px;font-size:12px;color:#1f1f1f;letter-spacing:-0.964px;">0.000</span>
<span class="t" style="left:1738.30px;top:522.54px;font-size:12px;color:#1f1f1f;letter-spacing:0.072px;">Location</span>
<span class="t" style="left:1834.30px;top:522.54px;font-size:12px;color:#1f1f1f;letter-spacing:-0.484px;">Place...</span>
<span class="t" style="left:1722.80px;top:547.38px;font-size:13.33px;color:#222;letter-spacing:-0.171px;">Wallpaper</span>
<span class="t" style="left:1738.30px;top:571.04px;font-size:12px;color:#1f1f1f;letter-spacing:-0.311px;">Filename</span>
<span class="t" style="left:1819.50px;top:570.34px;font-size:12px;color:#777;letter-spacing:-0.138px;">(none)</span>
<span class="t" style="left:1873.50px;top:571.04px;font-size:12px;color:#1f1f1f;letter-spacing:-0.334px;">...</span>
<span class="t" style="left:1738.30px;top:594.24px;font-size:12px;color:#1f1f1f;letter-spacing:-0.551px;">Show</span>
<span class="t" style="left:1738.30px;top:613.84px;font-size:12px;color:#1f1f1f;letter-spacing:-0.935px;">Gray</span>
<span class="t" style="left:42.90px;top:878.04px;font-size:12px;color:#1f1f1f;letter-spacing:-0.539px;">End</span>
<span class="t" style="left:91.20px;top:878.04px;font-size:12px;color:#1f1f1f;letter-spacing:-0.538px;">Near</span>
<span class="t" style="left:144.30px;top:878.04px;font-size:12px;color:#1f1f1f;letter-spacing:-0.179px;">Point</span>
<span class="t" style="left:200.30px;top:878.04px;font-size:12px;color:#1f1f1f;letter-spacing:0.819px;">Mid</span>
<span class="t" style="left:249.40px;top:878.04px;font-size:12px;color:#1f1f1f;letter-spacing:-0.520px;">Cen</span>
<span class="t" style="left:297.00px;top:878.04px;font-size:12px;color:#1f1f1f;letter-spacing:0.446px;">Int</span>
<span class="t" style="left:340.20px;top:878.04px;font-size:12px;color:#1f1f1f;letter-spacing:-0.791px;">Perp</span>
<span class="t" style="left:392.20px;top:878.04px;font-size:12px;color:#1f1f1f;letter-spacing:-0.037px;">Tan</span>
<span class="t" style="left:439.10px;top:878.04px;font-size:12px;color:#1f1f1f;letter-spacing:-0.094px;">Quad</span>
<span class="t" style="left:496.20px;top:878.04px;font-size:12px;color:#1f1f1f;letter-spacing:-0.217px;">Knot</span>
<span class="t" style="left:549.30px;top:878.04px;font-size:12px;color:#1f1f1f;letter-spacing:-0.624px;">Vertex</span>
<span class="t" style="left:608.50px;top:878.04px;font-size:12px;color:#1f1f1f;letter-spacing:-0.269px;">Project</span>
<span class="t" style="left:681.00px;top:878.04px;font-size:12px;color:#1f1f1f;letter-spacing:-0.358px;">Disable</span>
<span class="t" style="left:41.40px;top:909.14px;font-size:12px;color:#555;letter-spacing:-0.817px;">CPlane</span>
<span class="t" style="left:121.80px;top:909.14px;font-size:12px;color:#555;letter-spacing:-0.432px;">x 2.359</span>
<span class="t" style="left:200.30px;top:909.14px;font-size:12px;color:#555;letter-spacing:-0.355px;">y 235.079</span>
<span class="t" style="left:303.20px;top:909.14px;font-size:12px;color:#555;letter-spacing:-0.567px;">z 0</span>
<span class="t" style="left:392.20px;top:909.14px;font-size:12px;color:#555;letter-spacing:-0.826px;">Feet</span>
<span class="t" style="left:479.80px;top:909.14px;font-size:12px;color:#555;letter-spacing:-0.081px;">Default</span>
<span class="t" style="left:655.30px;top:909.14px;font-size:12px;color:#555;letter-spacing:-0.257px;">Grid Snap</span>
<span class="t" style="left:726.50px;top:909.14px;font-size:12px;color:#222;letter-spacing:0.292px;font-weight:700;">Ortho</span>
<span class="t" style="left:778.10px;top:909.14px;font-size:12px;color:#222;letter-spacing:-0.283px;font-weight:700;">Planar</span>
<span class="t" style="left:831.90px;top:909.14px;font-size:12px;color:#222;letter-spacing:-0.253px;font-weight:700;">Osnap</span>
<span class="t" style="left:889.00px;top:909.14px;font-size:12px;color:#555;letter-spacing:-0.495px;">SmartTrack</span>
<span class="t" style="left:971.50px;top:909.14px;font-size:12px;color:#555;letter-spacing:-0.278px;">Gumball (CPlane)</span>
<span class="t" style="left:1102.70px;top:909.14px;font-size:12px;color:#555;letter-spacing:-0.152px;">Auto CPlane (Object)</span>
<span class="t" style="left:1238.00px;top:909.14px;font-size:12px;color:#555;letter-spacing:-0.120px;">Record History</span>
<span class="t" style="left:1338.70px;top:909.14px;font-size:12px;color:#555;letter-spacing:-0.094px;">Filter</span>
<span class="t" style="left:1387.80px;top:909.14px;font-size:12px;color:#555;letter-spacing:-0.130px;">Available physical memory: 21665 MB</span>
<span class="t" style="left:4px;top:875.500px;font-size:12px;color:#6b6b6b;transform:rotate(-90deg);transform-origin:0 0;margin-top:28px;letter-spacing:-0.2px">Osnap</span>
</body></html>
